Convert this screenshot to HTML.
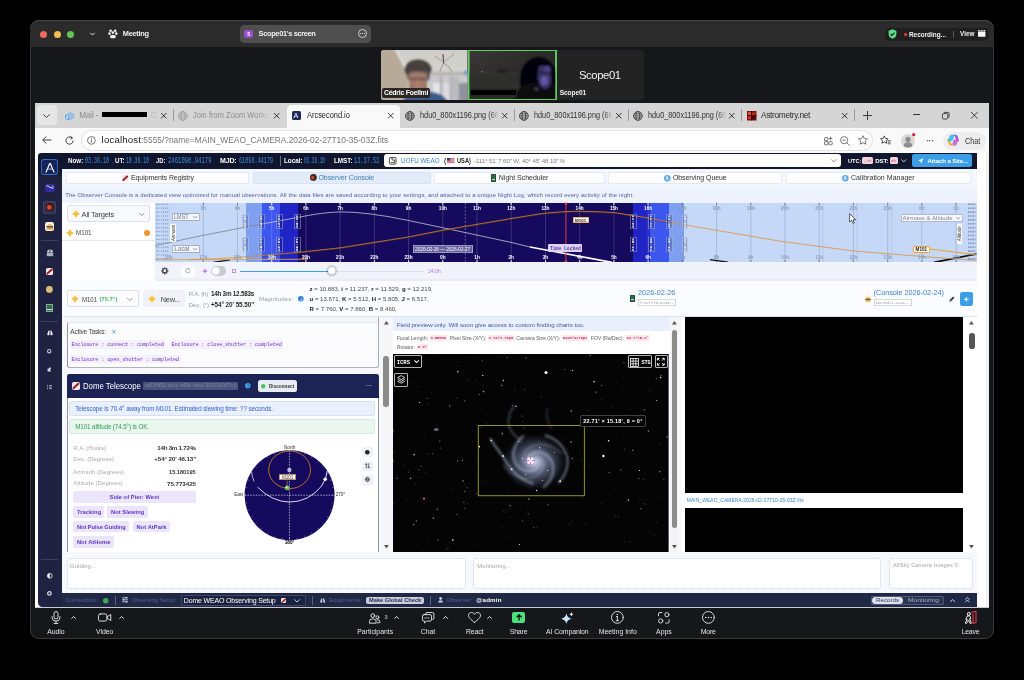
<!DOCTYPE html>
<html>
<head>
<meta charset="utf-8">
<title>Zoom Meeting</title>
<style>
html,body{margin:0;padding:0;background:#000;}
body{width:1024px;height:680px;position:relative;overflow:hidden;font-family:"Liberation Sans",sans-serif;}
.a{position:absolute;}
.t{position:absolute;white-space:nowrap;line-height:1;}
svg{position:absolute;overflow:visible;}
</style>
</head>
<body>
<div id="root" style="position:absolute;left:0;top:0;width:1024px;height:680px;will-change:transform;">
<!-- ===== sec_zoom ===== -->
<div class="a" style="left:30.0px;top:20.0px;width:964.0px;height:619.0px;background:#16171b;border-radius:9px;box-shadow:inset 0 0 0 1px #38383a;"></div>
<div class="a" style="left:30.0px;top:20.0px;width:964.0px;height:27.0px;background:#2b2b2c;border-radius:9px 9px 0 0;box-shadow:inset 0 1px 0 #454547;"></div>
<svg style="left:40.30px;top:30.50px;" width="7.00" height="7.00" viewBox="0 0 7.00 7.00"><ellipse cx="3.50" cy="3.50" rx="3.50" ry="3.50" fill="#ed6a5e"/></svg>
<svg style="left:53.50px;top:30.50px;" width="7.00" height="7.00" viewBox="0 0 7.00 7.00"><ellipse cx="3.50" cy="3.50" rx="3.50" ry="3.50" fill="#f4bf4f"/></svg>
<svg style="left:66.70px;top:30.50px;" width="7.00" height="7.00" viewBox="0 0 7.00 7.00"><ellipse cx="3.50" cy="3.50" rx="3.50" ry="3.50" fill="#61c554"/></svg>
<svg style="left:89.5px;top:32.0px;" width="5" height="4" viewBox="0 0 5 4"><path d="M0.3 0.8 L2.5 3 L4.7 0.8" fill="none" stroke="#e8e8e8" stroke-width="1"/></svg>
<svg style="left:108.0px;top:29.0px;" width="10" height="10" viewBox="0 0 10 10"><g fill="#f2f2f2"><circle cx="2.6" cy="1.7" r="1.3"/><circle cx="7.2" cy="1.7" r="1.3"/><circle cx="4.9" cy="3.6" r="1.3"/><circle cx="1.5" cy="4.6" r="1.3"/><circle cx="8.3" cy="4.6" r="1.3"/><rect x="2" y="6" width="5.8" height="3.3" rx="1.6"/></g></svg>
<div class="t" style="left:122.8px;top:30px;font-size:7.40px;color:#f0f0f0;font-weight:bold;letter-spacing:-0.280px;">Meeting</div>
<div class="a" style="left:240.2px;top:25.0px;width:131.2px;height:17.7px;background:#4f4f50;border-radius:4.5px;"></div>
<div class="a" style="left:244.4px;top:29.7px;width:8.7px;height:8.6px;background:#9b50cb;border-radius:2px;"></div>
<div class="t" style="left:247.3px;top:33px;font-size:4.60px;color:#fff;font-weight:bold;letter-spacing:-0.000px;">S</div>
<div class="t" style="left:258.6px;top:30px;font-size:7.40px;color:#f2f2f2;font-weight:bold;letter-spacing:-0.327px;">Scope01&#x27;s screen</div>
<svg style="left:358.2px;top:29.1px;" width="9" height="9" viewBox="0 0 9 9"><circle cx="4.5" cy="4.5" r="4" fill="none" stroke="#e6e6e6" stroke-width="0.8"/><circle cx="2.6" cy="4.5" r="0.6" fill="#e6e6e6"/><circle cx="4.5" cy="4.5" r="0.6" fill="#e6e6e6"/><circle cx="6.4" cy="4.5" r="0.6" fill="#e6e6e6"/></svg>
<div class="a" style="left:885.0px;top:28.0px;width:103.7px;height:12.6px;background:#1f1f20;border-radius:5px;"></div>
<svg style="left:888.3px;top:29.3px;" width="9" height="10" viewBox="0 0 9 10"><path d="M4.5 0.3 L8.4 1.8 V5 C8.4 7.4 6.6 9 4.5 9.8 C2.4 9 0.6 7.4 0.6 5 V1.8 Z" fill="#5fdc8a"/><path d="M2.6 5 L4 6.4 L6.5 3.6" fill="none" stroke="#1f1f20" stroke-width="1.1"/></svg>
<svg style="left:903.80px;top:32.60px;" width="3.20" height="3.20" viewBox="0 0 3.20 3.20"><ellipse cx="1.60" cy="1.60" rx="1.60" ry="1.60" fill="#f23c3c"/></svg>
<div class="t" style="left:909.0px;top:31px;font-size:7.20px;color:#f2f2f2;font-weight:bold;transform-origin:0 50%;transform:scaleX(0.8893);">Recording...</div>
<div class="a" style="left:953.2px;top:30.6px;width:0.7px;height:7.4px;background:#5a5a5c;"></div>
<div class="t" style="left:959.6px;top:30px;font-size:7.20px;color:#f2f2f2;font-weight:bold;transform-origin:0 50%;transform:scaleX(0.8846);">View</div>
<svg style="left:977.7px;top:30.2px;" width="8" height="7" viewBox="0 0 8 7"><rect x="0" y="1.5" width="7.4" height="5.3" rx="0.6" fill="#f5f5f5"/><rect x="0.2" y="0" width="1.6" height="1.2" fill="#f5f5f5"/><rect x="2.9" y="0" width="1.6" height="1.2" fill="#f5f5f5"/><rect x="5.6" y="0" width="1.6" height="1.2" fill="#f5f5f5"/></svg>
<svg style="left:380.9px;top:50.0px;" width="86.5" height="50" viewBox="0 0 86.5 50"><defs><filter id="bl1" x="-10%" y="-10%" width="120%" height="120%"><feGaussianBlur stdDeviation="0.9"/></filter>
<filter id="bl2" x="-10%" y="-10%" width="120%" height="120%"><feGaussianBlur stdDeviation="0.5"/></filter>
<clipPath id="c1"><path d="M3 0 H86.5 V50 H3 A3 3 0 0 1 0 47 V3 A3 3 0 0 1 3 0 Z"/></clipPath>
<linearGradient id="ceil" x1="0" y1="0" x2="0" y2="1"><stop offset="0" stop-color="#cfcdc8"/><stop offset="1" stop-color="#dcdad5"/></linearGradient></defs>
<g clip-path="url(#c1)"><rect width="87" height="50" fill="url(#ceil)"/>
<g filter="url(#bl1)">
<path d="M-2 -2 H16 L27 20 V52 H-2 Z" fill="#b7aa99"/>
<path d="M16 -2 L27 20 L27 25 L13 -2 Z" fill="#e3e0da"/>
<rect x="47" y="24" width="42" height="28" fill="#c9c8cb"/>
<rect x="50" y="22" width="39" height="3" fill="#b4b2b0"/>
<rect x="52" y="33" width="7" height="18" fill="#e6e6ea"/>
<rect x="62" y="33" width="6" height="18" fill="#dcdce0"/>
<rect x="59" y="26" width="2" height="25" fill="#a9a8ad"/>
<rect x="69" y="26" width="2.5" height="25" fill="#b1b0b5"/>
<rect x="77" y="33" width="11" height="19" fill="#8f919c"/>
<rect x="72" y="27" width="6" height="24" fill="#bcbbc0"/>
<circle cx="85" cy="23" r="2.5" fill="#6fa0c8"/>
<ellipse cx="37" cy="19.5" rx="13.5" ry="10" fill="#46413d"/>
<ellipse cx="31" cy="26" rx="5" ry="6" fill="#57514c"/>
<ellipse cx="44" cy="26" rx="5" ry="6" fill="#57514c"/>
<path d="M28 24 Q37 19 46 24 V38 Q37 44 28 38 Z" fill="#a17a6c"/>
<rect x="29" y="27.5" width="16" height="3" fill="#7d5d54"/>
<path d="M36 30 L38 30 L39 37 L35 37 Z" fill="#b4806f"/>
<path d="M29 36 Q37 46 46 36 V42 H29 Z" fill="#7d6259"/>
<path d="M22 52 Q24 41 40 41 Q62 41 67 52 Z" fill="#3b5b88"/>
</g>
<g filter="url(#bl2)" stroke-linecap="round">
<path d="M62 4.5 L62.6 13" stroke="#4a4744" stroke-width="1.1"/>
<path d="M62.6 13 L59 21 M62.6 13 L68 17 L71 22" stroke="#77736e" stroke-width="0.6" fill="none"/>
<path d="M55 7 L63 12 L72 5" stroke="#8a8680" stroke-width="0.55" fill="none"/>
<circle cx="55" cy="7" r="1.2" fill="#c8b48c"/><circle cx="72" cy="4.5" r="1.2" fill="#c8b48c"/><circle cx="59" cy="21" r="1" fill="#c8b48c"/><circle cx="71" cy="22" r="1" fill="#c8b48c"/>
</g></g></svg>
<div class="a" style="left:382.0px;top:88.0px;width:48.2px;height:9.8px;background:#2b2726;border-radius:2px;"></div>
<div class="t" style="left:384.0px;top:90px;font-size:6.90px;color:#fff;font-weight:bold;letter-spacing:-0.239px;">Cédric Foellmi</div>
<div class="a" style="left:467.7px;top:49.7px;width:89.3px;height:50.5px;background:#5fcf62;"></div>
<svg style="left:469.0px;top:51.0px;" width="86.7" height="48" viewBox="0 0 87 48.6"><defs><filter id="bl3" x="-10%" y="-10%" width="120%" height="120%"><feGaussianBlur stdDeviation="1.1"/></filter>
<clipPath id="c2"><rect x="0" y="0" width="87" height="48.6"/></clipPath>
<linearGradient id="dk" x1="0" y1="0" x2="1" y2="1"><stop offset="0" stop-color="#3a3837"/><stop offset="0.5" stop-color="#2b2a29"/><stop offset="1" stop-color="#232322"/></linearGradient></defs>
<g clip-path="url(#c2)"><rect width="87" height="48.6" fill="url(#dk)"/>
<g filter="url(#bl3)">
<path d="M0 22 L55 25 L55 50 L0 50 Z" fill="#2f2f2b"/>
<path d="M0 21 L60 24" stroke="#3d3c38" stroke-width="1"/>
<path d="M30 19 L39 19.5 L37 22.5 L28 22 Z" fill="#1b1b1b"/>
<path d="M10 38 L50 38" stroke="#3a3a36" stroke-width="1"/>
<ellipse cx="70" cy="30" rx="19" ry="24" fill="#060608"/>
<path d="M44 50 Q48 36 60 33 L88 33 V50 Z" fill="#09090c"/>
<path d="M71 15 Q80 13 82 22 L83 30 Q82 37 77 39 Q72 38 70 32 Q68 22 71 15 Z" fill="#3a3368"/>
<ellipse cx="79" cy="19" rx="3.4" ry="4" fill="#4b4384"/>
<ellipse cx="76" cy="30" rx="3.6" ry="4.6" fill="#6258a4"/>
<path d="M70 22 H84" stroke="#1c1a34" stroke-width="1.6"/>
<ellipse cx="68" cy="38.5" rx="2.6" ry="1" fill="#4a4666"/>
</g>
<circle cx="12.7" cy="21" r="0.8" fill="#8a8a5a"/>
</g></svg>
<div class="a" style="left:470.0px;top:88.2px;width:47.0px;height:9.8px;background:#2a2928;border-radius:2px;"></div>
<div class="a" style="left:471.0px;top:90.0px;width:45.0px;height:4.8px;background:#000;"></div>
<div class="a" style="left:557.0px;top:50.0px;width:87.0px;height:50.0px;background:#232324;border-radius:0 4px 4px 0;"></div>
<div class="t" style="left:579.0px;top:70px;font-size:11.30px;color:#f4f4f4;letter-spacing:-0.430px;">Scope01</div>
<div class="a" style="left:558.5px;top:88.3px;width:29.0px;height:9.3px;background:#262626;border-radius:1.5px;"></div>
<div class="t" style="left:559.8px;top:90px;font-size:6.50px;color:#f2f2f2;font-weight:bold;letter-spacing:-0.077px;">Scope01</div>
<!-- ===== sec_chrome ===== -->
<div class="a" style="left:34.7px;top:102.7px;width:954.3px;height:504.9px;background:#ffffff;"></div>
<div class="a" style="left:34.7px;top:102.7px;width:954.3px;height:24.9px;background:#d5d5d5;"></div>
<div class="a" style="left:37.0px;top:105.0px;width:19.6px;height:19.9px;background:#e6e6e6;border-radius:3.5px;"></div>
<svg style="left:43.4px;top:113.8px;" width="7" height="4" viewBox="0 0 7 4"><path d="M0.3 0.4 L3.5 3.4 L6.7 0.4" fill="none" stroke="#333" stroke-width="0.9"/></svg>
<svg style="left:63.5px;top:110.5px;" width="11" height="10" viewBox="0 0 11 10"><path d="M1 4 L6.5 1 L10.5 3 V7 L5 9.6 L1 7.5 Z" fill="#7db4e8" opacity="0.75"/><path d="M1 4 L5 6 V9.6 L1 7.5 Z" fill="#4f8fd6" opacity="0.8"/><circle cx="3" cy="6.6" r="1.3" fill="#e9f2fc" opacity="0.8"/><path d="M5 6 L10.5 3" stroke="#a9cdf2" stroke-width="0.8"/></svg>
<div class="t" style="left:79.2px;top:111px;font-size:8.30px;color:#8c8c8c;letter-spacing:-0.198px;">Mail -</div>
<div class="a" style="left:101.9px;top:112.0px;width:45.3px;height:5.0px;background:#000;"></div>
<div class="t" style="left:150.6px;top:111px;font-size:8.30px;color:#bdbdbd;">O</div>
<svg style="left:160.9px;top:112.9px;" width="5.4" height="5.4" viewBox="0 0 5.4 5.4"><path d="M0 0 L5.4 5.4 M5.4 0 L0 5.4" stroke="#2a2a2a" stroke-width="0.9" fill="none"/></svg>
<div class="a" style="left:173.0px;top:109.3px;width:0.8px;height:11.8px;background:#9a9a9a;"></div>
<svg style="left:177.9px;top:110.6px;" width="9.8" height="9.8" viewBox="0 0 9.8 9.8"><g fill="none" stroke="#9a9a9a" stroke-width="0.8"><circle cx="4.9" cy="4.9" r="4.4"/><ellipse cx="4.9" cy="4.9" rx="1.9800000000000002" ry="4.4"/><path d="M0.5 4.9 H9.3 M1.2 2.8000000000000003 H8.600000000000001 M1.2 7.0 H8.600000000000001"/></g></svg>
<div class="t" style="left:193.0px;top:111px;font-size:8.30px;color:#8c8c8c;transform-origin:0 50%;transform:scaleX(0.9070);-webkit-mask-image:linear-gradient(90deg,#000 85%,transparent 100%);mask-image:linear-gradient(90deg,#000 85%,transparent 100%);">Join from Zoom Workp</div>
<svg style="left:274.3px;top:112.9px;" width="5.4" height="5.4" viewBox="0 0 5.4 5.4"><path d="M0 0 L5.4 5.4 M5.4 0 L0 5.4" stroke="#2a2a2a" stroke-width="0.9" fill="none"/></svg>
<div class="a" style="left:287.0px;top:105.0px;width:113.3px;height:23.0px;background:#f9f9f9;border-radius:4px 4px 0 0;"></div>
<div class="a" style="left:291.5px;top:111.0px;width:9.0px;height:9.0px;background:#1d2a5c;border-radius:1.5px;"></div>
<div class="t" style="left:293.6px;top:112px;font-size:7.20px;color:#fff;letter-spacing:0.000px;">A</div>
<div class="t" style="left:306.5px;top:111px;font-size:8.30px;color:#222;transform-origin:0 50%;transform:scaleX(0.8941);">Arcsecond.io</div>
<svg style="left:388.3px;top:112.9px;" width="5.4" height="5.4" viewBox="0 0 5.4 5.4"><path d="M0 0 L5.4 5.4 M5.4 0 L0 5.4" stroke="#2a2a2a" stroke-width="0.9" fill="none"/></svg>
<svg style="left:405.1px;top:110.6px;" width="9.8" height="9.8" viewBox="0 0 9.8 9.8"><g fill="none" stroke="#333" stroke-width="0.8"><circle cx="4.9" cy="4.9" r="4.4"/><ellipse cx="4.9" cy="4.9" rx="1.9800000000000002" ry="4.4"/><path d="M0.5 4.9 H9.3 M1.2 2.8000000000000003 H8.600000000000001 M1.2 7.0 H8.600000000000001"/></g></svg>
<div class="t" style="left:420.0px;top:111px;font-size:8.30px;color:#303030;transform-origin:0 50%;transform:scaleX(0.8816);padding-bottom:3px;-webkit-mask-image:linear-gradient(90deg,#000 90%,transparent 100%);mask-image:linear-gradient(90deg,#000 90%,transparent 100%);">hdu0_800x1196.png (66</div>
<svg style="left:501.7px;top:112.9px;" width="5.4" height="5.4" viewBox="0 0 5.4 5.4"><path d="M0 0 L5.4 5.4 M5.4 0 L0 5.4" stroke="#2a2a2a" stroke-width="0.9" fill="none"/></svg>
<div class="a" style="left:514.0px;top:109.3px;width:0.8px;height:11.8px;background:#9a9a9a;"></div>
<svg style="left:519.1px;top:110.6px;" width="9.8" height="9.8" viewBox="0 0 9.8 9.8"><g fill="none" stroke="#333" stroke-width="0.8"><circle cx="4.9" cy="4.9" r="4.4"/><ellipse cx="4.9" cy="4.9" rx="1.9800000000000002" ry="4.4"/><path d="M0.5 4.9 H9.3 M1.2 2.8000000000000003 H8.600000000000001 M1.2 7.0 H8.600000000000001"/></g></svg>
<div class="t" style="left:533.8px;top:111px;font-size:8.30px;color:#303030;transform-origin:0 50%;transform:scaleX(0.8793);padding-bottom:3px;-webkit-mask-image:linear-gradient(90deg,#000 90%,transparent 100%);mask-image:linear-gradient(90deg,#000 90%,transparent 100%);">hdu0_800x1196.png (66</div>
<svg style="left:616.1px;top:112.9px;" width="5.4" height="5.4" viewBox="0 0 5.4 5.4"><path d="M0 0 L5.4 5.4 M5.4 0 L0 5.4" stroke="#2a2a2a" stroke-width="0.9" fill="none"/></svg>
<div class="a" style="left:628.4px;top:109.3px;width:0.8px;height:11.8px;background:#9a9a9a;"></div>
<svg style="left:633.1px;top:110.6px;" width="9.8" height="9.8" viewBox="0 0 9.8 9.8"><g fill="none" stroke="#333" stroke-width="0.8"><circle cx="4.9" cy="4.9" r="4.4"/><ellipse cx="4.9" cy="4.9" rx="1.9800000000000002" ry="4.4"/><path d="M0.5 4.9 H9.3 M1.2 2.8000000000000003 H8.600000000000001 M1.2 7.0 H8.600000000000001"/></g></svg>
<div class="t" style="left:648.0px;top:111px;font-size:8.30px;color:#303030;transform-origin:0 50%;transform:scaleX(0.8771);padding-bottom:3px;-webkit-mask-image:linear-gradient(90deg,#000 90%,transparent 100%);mask-image:linear-gradient(90deg,#000 90%,transparent 100%);">hdu0_800x1196.png (66</div>
<svg style="left:728.7px;top:112.9px;" width="5.4" height="5.4" viewBox="0 0 5.4 5.4"><path d="M0 0 L5.4 5.4 M5.4 0 L0 5.4" stroke="#2a2a2a" stroke-width="0.9" fill="none"/></svg>
<div class="a" style="left:740.6px;top:109.3px;width:0.8px;height:11.8px;background:#9a9a9a;"></div>
<svg style="left:746.5px;top:111.0px;" width="9.5" height="9.5" viewBox="0 0 9.5 9.5"><rect width="9.5" height="9.5" fill="#7a1410"/><rect x="1" y="1" width="3" height="3" fill="#e04a32"/><rect x="5" y="1.5" width="3.5" height="2.5" fill="#c22a1c"/><rect x="1.2" y="5" width="2.6" height="3.4" fill="#c9321f"/><rect x="5" y="5" width="3.4" height="3.4" fill="#4a0b08"/><path d="M0 4.5 H9.5 M4.5 0 V9.5" stroke="#2a0504" stroke-width="0.7"/></svg>
<div class="t" style="left:761.0px;top:111px;font-size:8.30px;color:#2a2a2a;letter-spacing:-0.311px;">Astrometry.net</div>
<svg style="left:841.9px;top:113.1px;" width="5.4" height="5.4" viewBox="0 0 5.4 5.4"><path d="M0 0 L5.4 5.4 M5.4 0 L0 5.4" stroke="#2a2a2a" stroke-width="0.9" fill="none"/></svg>
<div class="a" style="left:854.1px;top:109.3px;width:0.8px;height:11.8px;background:#9a9a9a;"></div>
<svg style="left:862.8px;top:111.2px;" width="9" height="9" viewBox="0 0 9 9"><path d="M4.5 0 V9 M0 4.5 H9" stroke="#2a2a2a" stroke-width="0.9"/></svg>
<div class="a" style="left:913.4px;top:114.2px;width:7.0px;height:0.9px;background:#333;"></div>
<svg style="left:942.0px;top:112.0px;" width="7.5" height="7.5" viewBox="0 0 7.5 7.5"><rect x="0.4" y="1.6" width="5.4" height="5.4" rx="1.2" fill="none" stroke="#333" stroke-width="0.9"/><path d="M1.8 1.4 V1 Q1.8 0.4 2.6 0.4 H6 Q7 0.4 7 1.4 V5 Q7 5.6 6.4 5.6" fill="none" stroke="#333" stroke-width="0.9"/></svg>
<svg style="left:971.2px;top:112.3px;" width="6.6" height="6.6" viewBox="0 0 6.6 6.6"><path d="M0 0 L6.6 6.6 M6.6 0 L0 6.6" stroke="#333" stroke-width="0.9" fill="none"/></svg>
<div class="a" style="left:34.7px;top:127.6px;width:954.3px;height:25.4px;background:#f9f9f9;"></div>
<svg style="left:42.2px;top:136.4px;" width="9.6" height="8" viewBox="0 0 9.6 8"><path d="M9.4 4 H0.8 M4.2 0.5 L0.7 4 L4.2 7.5" fill="none" stroke="#333" stroke-width="0.95"/></svg>
<svg style="left:64.9px;top:135.5px;" width="9.2" height="9.2" viewBox="0 0 9.2 9.2"><path d="M8.1 4.6 A3.6 3.6 0 1 1 6.9 1.9" fill="none" stroke="#333" stroke-width="0.95"/><path d="M5.6 0.4 L7.6 2 L5.6 3.2" fill="none" stroke="#333" stroke-width="0.95"/></svg>
<div class="a" style="left:82.3px;top:130.8px;width:790.1px;height:18.8px;background:#ffffff;border-radius:9.4px;box-shadow:0 0 0 0.8px #dcdcdc;"></div>
<svg style="left:86.9px;top:135.9px;" width="8.8" height="8.8" viewBox="0 0 8.8 8.8"><circle cx="4.4" cy="4.4" r="3.9" fill="none" stroke="#555" stroke-width="0.8"/><path d="M4.4 3.8 V6.6" stroke="#555" stroke-width="0.9"/><circle cx="4.4" cy="2.5" r="0.55" fill="#555"/></svg>
<div class="t" style="left:101.6px;top:135px;font-size:9.70px;color:#222;letter-spacing:0.146px;">localhost</div>
<div class="t" style="left:141.2px;top:135px;font-size:9.70px;color:#767676;transform-origin:0 50%;transform:scaleX(0.8640);">:5555/?name=MAIN_WEAO_CAMERA.2026-02-27T10-35-03Z.fits</div>
<svg style="left:823.5px;top:136.0px;" width="9.5" height="9.5" viewBox="0 0 9.5 9.5"><g fill="none" stroke="#555" stroke-width="0.8"><rect x="0.5" y="1.6" width="3.4" height="3.2" rx="0.6"/><rect x="0.5" y="5.6" width="3.4" height="3.2" rx="0.6"/><rect x="4.8" y="5.6" width="3.4" height="3.2" rx="0.6"/><path d="M6.6 0.6 V4.2 M4.8 2.4 H8.4"/></g></svg>
<svg style="left:840.2px;top:135.7px;" width="10" height="10" viewBox="0 0 10 10"><g fill="none" stroke="#555" stroke-width="0.8"><circle cx="4.2" cy="4.2" r="3.6"/><path d="M6.9 6.9 L9.6 9.6 M2.6 4.2 H5.8"/></g></svg>
<svg style="left:858.0px;top:135.2px;" width="10" height="10" viewBox="0 0 10 10"><path d="M5 0.7 L6.35 3.55 L9.45 3.95 L7.15 6.1 L7.75 9.2 L5 7.7 L2.25 9.2 L2.85 6.1 L0.55 3.95 L3.65 3.55 Z" fill="none" stroke="#555" stroke-width="0.8" stroke-linejoin="round"/></svg>
<svg style="left:880.3px;top:135.2px;" width="11" height="10" viewBox="0 0 11 10"><path d="M4.3 0.9 L5.45 3.4 L8.1 3.75 L6.15 5.6 L6.65 8.3 L4.3 7 L1.95 8.3 L2.45 5.6 L0.5 3.75 L3.15 3.4 Z" fill="none" stroke="#333" stroke-width="0.85" stroke-linejoin="round"/><path d="M7.6 5.6 H10.6 M7.6 7.2 H10.6 M7.8 8.8 H10.6" stroke="#333" stroke-width="0.8"/></svg>
<svg style="left:900.60px;top:133.60px;" width="14.00" height="14.00" viewBox="0 0 14.00 14.00"><ellipse cx="7.00" cy="7.00" rx="7.00" ry="7.00" fill="#d9d9d9"/></svg>
<svg style="left:900.6px;top:133.6px;" width="14" height="14" viewBox="0 0 14 14"><circle cx="7" cy="5.4" r="2.6" fill="#8e8e8e"/><path d="M2.6 12 Q2.8 8.3 7 8.3 Q11.2 8.3 11.4 12 Q9.4 13.6 7 13.6 Q4.6 13.6 2.6 12 Z" fill="#8e8e8e"/></svg>
<svg style="left:911.90px;top:133.40px;" width="3.30" height="3.30" viewBox="0 0 3.30 3.30"><ellipse cx="1.65" cy="1.65" rx="1.65" ry="1.65" fill="#e0262a"/></svg>
<svg style="left:926.50px;top:139.90px;" width="1.30" height="1.30" viewBox="0 0 1.30 1.30"><ellipse cx="0.65" cy="0.65" rx="0.65" ry="0.65" fill="#333"/></svg>
<svg style="left:929.40px;top:139.90px;" width="1.30" height="1.30" viewBox="0 0 1.30 1.30"><ellipse cx="0.65" cy="0.65" rx="0.65" ry="0.65" fill="#333"/></svg>
<svg style="left:932.30px;top:139.90px;" width="1.30" height="1.30" viewBox="0 0 1.30 1.30"><ellipse cx="0.65" cy="0.65" rx="0.65" ry="0.65" fill="#333"/></svg>
<div class="a" style="left:942.7px;top:131.6px;width:43.1px;height:18.0px;background:#ededed;border-radius:9px;"></div>
<svg style="left:947.4px;top:134.4px;" width="12.4" height="12.4" viewBox="0 0 12.4 12.4"><defs><linearGradient id="cp1" x1="0" y1="0" x2="1" y2="1"><stop offset="0" stop-color="#2a9df4"/><stop offset="0.45" stop-color="#8a5cf0"/><stop offset="1" stop-color="#e0489a"/></linearGradient><linearGradient id="cp2" x1="0" y1="0" x2="1" y2="1"><stop offset="0" stop-color="#37c9a0"/><stop offset="0.5" stop-color="#f5b53a"/><stop offset="1" stop-color="#f0603a"/></linearGradient></defs><path d="M4.2 0.8 H8.6 Q10.2 0.8 10.7 2.4 L11.9 6.2 Q12.3 7.6 10.9 7.6 H9.6 L8 2.6 Q7.7 1.7 6.8 1.7 H5.2 Z" fill="url(#cp1)"/><path d="M8.2 11.6 H3.8 Q2.2 11.6 1.7 10 L0.5 6.2 Q0.1 4.8 1.5 4.8 H2.8 L4.4 9.8 Q4.7 10.7 5.6 10.7 H7.2 Z" fill="url(#cp2)"/><path d="M4.2 0.8 Q3.0 0.9 2.6 2.2 L1.4 6 Q1.2 7 2.4 7 H4.8 Q5.6 7 5.9 6.1 L7 2.4 Q7.3 1.7 6.8 1.7 L5.2 1.7 Z" fill="#36b8e6" opacity="0.9"/><path d="M8.2 11.6 Q9.4 11.5 9.8 10.2 L11 6.4 Q11.2 5.4 10 5.4 H7.6 Q6.8 5.4 6.5 6.3 L5.4 10 Q5.1 10.7 5.6 10.7 L7.2 10.7 Z" fill="#c95ad6" opacity="0.9"/></svg>
<div class="t" style="left:964.7px;top:137px;font-size:8.40px;color:#333;transform-origin:0 50%;transform:scaleX(0.8623);">Chat</div>
<!-- ===== sec_apptop ===== -->
<div class="a" style="left:37.5px;top:153.2px;width:939.5px;height:454.4px;background:#f4f6fc;border-radius:3.5px 0 0 0;"></div>
<div class="a" style="left:37.5px;top:153.2px;width:24.4px;height:454.4px;background:#1f2341;border-radius:3.5px 0 0 0;"></div>
<div class="a" style="left:61.9px;top:153.2px;width:915.1px;height:15.8px;background:#11162f;"></div>
<div class="a" style="left:37.5px;top:153.2px;width:24.4px;height:15.8px;background:#11162f;border-radius:3.5px 0 0 0;"></div>
<div class="a" style="left:37.5px;top:169.0px;width:24.4px;height:9.0px;background:linear-gradient(#11162f,#1f2341);"></div>
<div class="a" style="left:41.4px;top:159.2px;width:16.4px;height:15.8px;background:#14235c;border-radius:3px;box-shadow:inset 0 0 0 0.9px #2f71b6;"></div>
<svg style="left:44.6px;top:161.7px;" width="10" height="11" viewBox="0 0 10 11"><path d="M1 10 Q2.6 7 4.2 2.6 Q5 0.6 5.8 2.6 Q7.4 7 9 10" fill="none" stroke="#fff" stroke-width="1.25" stroke-linecap="round"/><path d="M3.3 6.9 Q5 7.6 6.7 6.9" fill="none" stroke="#fff" stroke-width="0.8"/></svg>
<div class="a" style="left:44.6px;top:183.5px;width:10.0px;height:8.9px;background:#2d2ca0;border-radius:2px;"></div>
<svg style="left:45.6px;top:185.4px;" width="8" height="5" viewBox="0 0 8 5"><path d="M0.4 1.4 Q1.6 0 2.8 1.4 T5 2.6 Q6 3.8 7.6 2.6" fill="none" stroke="#fff" stroke-width="0.9"/><circle cx="6.6" cy="1" r="0.6" fill="#fff"/></svg>
<div class="a" style="left:42.8px;top:200.8px;width:13.2px;height:13.1px;background:#2c3050;border-radius:2.5px;box-shadow:inset 0 0 0 0.8px #454a6a;"></div>
<svg style="left:45.50px;top:203.40px;" width="8.00" height="8.00" viewBox="0 0 8.00 8.00"><ellipse cx="4.00" cy="4.00" rx="4.30" ry="4.30" fill="#2a1a1e" stroke="#6a3a3a" stroke-width="0.6"/></svg>
<svg style="left:47.10px;top:205.00px;" width="4.80" height="4.80" viewBox="0 0 4.80 4.80"><ellipse cx="2.40" cy="2.40" rx="2.40" ry="2.40" fill="#e8412c"/></svg>
<div class="a" style="left:44.6px;top:222.3px;width:9.8px;height:9.2px;background:#fbf3e3;border-radius:2.2px;"></div>
<svg style="left:44.6px;top:222.3px;" width="9.8" height="9.2" viewBox="0 0 9.8 9.2"><path d="M1.8 3.6 Q4.9 0.8 8 3.6 Z" fill="#e8952e"/><rect x="1.5" y="4.2" width="6.8" height="1.3" fill="#3a2a1e"/><rect x="1.5" y="6" width="6.8" height="1.6" rx="0.8" fill="#e8952e"/></svg>
<div class="a" style="left:41.4px;top:240.2px;width:16.4px;height:0.7px;background:#3b405e;"></div>
<svg style="left:45.6px;top:249.4px;" width="8" height="7.5" viewBox="0 0 8 7.5"><path d="M1 3.6 Q1 0.5 4 0.5 Q7 0.5 7 3.6 Z" fill="#cfd2dc"/><rect x="0.8" y="4" width="6.4" height="3.2" fill="#aeb2c0"/><rect x="3.2" y="0.6" width="1.4" height="3" fill="#5a5f78"/></svg>
<div class="a" style="left:46.0px;top:268.0px;width:7.2px;height:7.2px;background:#f3e9ea;border-radius:1.6px;"></div>
<svg style="left:46.0px;top:268.0px;" width="7.2" height="7.2" viewBox="0 0 7.2 7.2"><path d="M1.4 5.6 L5.8 1.6" stroke="#9c1f24" stroke-width="2" stroke-linecap="round"/></svg>
<svg style="left:46.10px;top:286.20px;" width="6.80" height="6.80" viewBox="0 0 6.80 6.80"><ellipse cx="3.40" cy="3.40" rx="3.40" ry="3.40" fill="#d8c07c"/></svg>
<div class="a" style="left:46.4px;top:303.6px;width:6.4px;height:8.2px;background:#2f6a4a;border-radius:1.2px;box-shadow:inset 0 0 0 0.7px #a9c8b6;"></div>
<div class="a" style="left:47.4px;top:308.8px;width:4.4px;height:1.4px;background:#d5e4da;"></div>
<div class="a" style="left:41.4px;top:320.6px;width:16.4px;height:0.7px;background:#3b405e;"></div>
<svg style="left:46.6px;top:330.2px;" width="6" height="5.6" viewBox="0 0 6 5.6"><path d="M1.6 0.4 L0.3 4 A1.1 1.1 0 0 0 2.5 4.4 L2.6 0.6 Z M4.4 0.4 L5.7 4 A1.1 1.1 0 0 1 3.5 4.4 L3.4 0.6 Z" fill="#f0f0f4"/></svg>
<svg style="left:47.30px;top:349.20px;" width="4.40" height="4.40" viewBox="0 0 4.40 4.40"><ellipse cx="2.20" cy="2.20" rx="1.65" ry="1.65" fill="none" stroke="#c9ccd8" stroke-width="1.1"/></svg>
<svg style="left:47.0px;top:367.4px;" width="5.4" height="5" viewBox="0 0 5.4 5"><path d="M0.6 4.6 V1.6 H2 L2.6 0.6 H4 V4.6 Z" fill="#d5d8e2"/><circle cx="4.2" cy="2.8" r="1" fill="#1f2341"/></svg>
<svg style="left:47.2px;top:385.2px;" width="5" height="4.2" viewBox="0 0 5 4.2"><path d="M0 0.5 H1 M2 0.5 H5 M0 2.1 H1 M2 2.1 H5 M0 3.7 H1 M2 3.7 H5" stroke="#b9bdcc" stroke-width="0.8"/></svg>
<div class="t" style="left:67.6px;top:157px;font-size:7.00px;color:#fff;font-weight:bold;transform-origin:0 50%;transform:scaleX(0.8885);">Now:</div>
<div class="t" style="left:85.2px;top:157px;font-size:8.60px;color:#3b90de;font-family:'Liberation Mono',monospace;transform-origin:0 50%;transform:scaleX(0.5813);">03.36.10</div>
<div class="t" style="left:114.5px;top:157px;font-size:7.00px;color:#fff;font-weight:bold;transform-origin:0 50%;transform:scaleX(0.8910);">UT:</div>
<div class="t" style="left:126.2px;top:157px;font-size:8.60px;color:#3b90de;font-family:'Liberation Mono',monospace;transform-origin:0 50%;transform:scaleX(0.5571);">10.36.10</div>
<div class="t" style="left:156.0px;top:157px;font-size:7.00px;color:#fff;font-weight:bold;transform-origin:0 50%;transform:scaleX(0.8333);">JD:</div>
<div class="t" style="left:167.8px;top:157px;font-size:8.60px;color:#3b90de;font-family:'Liberation Mono',monospace;transform-origin:0 50%;transform:scaleX(0.6484);">2461098.94179</div>
<div class="t" style="left:220.0px;top:157px;font-size:7.00px;color:#fff;font-weight:bold;letter-spacing:-0.153px;">MJD:</div>
<div class="t" style="left:238.5px;top:157px;font-size:8.60px;color:#3b90de;font-family:'Liberation Mono',monospace;transform-origin:0 50%;transform:scaleX(0.6025);">61098.44179</div>
<div class="a" style="left:279.8px;top:155.8px;width:0.7px;height:10.0px;background:#6a6f88;"></div>
<div class="t" style="left:284.0px;top:157px;font-size:7.00px;color:#fff;font-weight:bold;transform-origin:0 50%;transform:scaleX(0.8974);">Local:</div>
<div class="t" style="left:304.4px;top:157px;font-size:8.60px;color:#3b90de;font-family:'Liberation Mono',monospace;transform-origin:0 50%;transform:scaleX(0.5087);">03.36.10</div>
<div class="t" style="left:333.7px;top:157px;font-size:7.00px;color:#fff;font-weight:bold;transform-origin:0 50%;transform:scaleX(0.9026);">LMST:</div>
<div class="t" style="left:353.7px;top:157px;font-size:8.60px;color:#3b90de;font-family:'Liberation Mono',monospace;transform-origin:0 50%;transform:scaleX(0.6128);">13.37.53</div>
<div class="a" style="left:384.3px;top:154.4px;width:457.1px;height:12.6px;background:#fff;border-radius:3px;"></div>
<svg style="left:389.4px;top:156.9px;" width="7.4" height="7.6" viewBox="0 0 7.4 7.6"><rect x="0.4" y="0.4" width="6.6" height="6.8" rx="0.8" fill="#fff" stroke="#222" stroke-width="0.8"/><path d="M1.8 1.8 H4 V4 M1.8 5.6 H5.6 V2.6" fill="none" stroke="#222" stroke-width="0.8"/></svg>
<div class="t" style="left:400.9px;top:157px;font-size:7.30px;color:#3c84c8;transform-origin:0 50%;transform:scaleX(0.8575);">UOFU WEAO</div>
<div class="t" style="left:444.0px;top:158px;font-size:6.60px;color:#333;font-weight:bold;">(</div>
<svg style="left:447.3px;top:158.0px;" width="7.4" height="5.2" viewBox="0 0 7.4 5.2"><rect width="7.4" height="5.2" fill="#e9e9ee"/><path d="M0 0.5 H7.4 M0 1.9 H7.4 M0 3.3 H7.4 M0 4.7 H7.4" stroke="#c83a45" stroke-width="0.75"/><rect width="3.2" height="2.7" fill="#2f3f86"/></svg>
<div class="t" style="left:456.6px;top:158px;font-size:6.40px;color:#222;font-weight:bold;transform-origin:0 50%;transform:scaleX(0.8885);">USA)</div>
<div class="t" style="left:474.0px;top:158px;font-size:6.20px;color:#7a7a7a;letter-spacing:-0.127px;">-111° 51&#x27; 7.60&quot; W, 40° 45&#x27; 48.19&quot; N</div>
<svg style="left:831.2px;top:159.2px;" width="5.6" height="3.6" viewBox="0 0 5.6 3.6"><path d="M0.3 0.4 L2.8 3 L5.3 0.4" fill="none" stroke="#777" stroke-width="0.8"/></svg>
<div class="t" style="left:847.9px;top:158px;font-size:6.20px;color:#fff;font-weight:bold;transform-origin:0 50%;transform:scaleX(0.9117);">UTC:</div>
<div class="a" style="left:862.4px;top:157.2px;width:10.9px;height:7.2px;background:#f1d3da;border-radius:1.5px;"></div>
<div class="t" style="left:864.1px;top:159px;font-size:4.20px;color:#d04a66;font-family:'Liberation Mono',monospace;letter-spacing:0.000px;">-7h</div>
<div class="t" style="left:875.3px;top:158px;font-size:6.20px;color:#fff;font-weight:bold;letter-spacing:-0.220px;">DST:</div>
<div class="a" style="left:889.5px;top:157.2px;width:8.0px;height:7.2px;background:#f1d3da;border-radius:1.5px;"></div>
<div class="t" style="left:891.0px;top:159px;font-size:4.20px;color:#d04a66;font-family:'Liberation Mono',monospace;letter-spacing:-0.000px;">0h</div>
<svg style="left:900.8px;top:159.2px;" width="5.6" height="3.6" viewBox="0 0 5.6 3.6"><path d="M0.3 0.4 L2.8 3 L5.3 0.4" fill="none" stroke="#dfe2ee" stroke-width="0.85"/></svg>
<div class="a" style="left:912.3px;top:153.9px;width:59.7px;height:12.9px;background:#3c9ee6;border-radius:2.5px;"></div>
<svg style="left:917.8px;top:157.6px;" width="5.6" height="5.6" viewBox="0 0 5.6 5.6"><path d="M5.4 0.2 L0.2 2.4 L2.4 3.2 L3.2 5.4 Z" fill="#fff"/></svg>
<div class="t" style="left:927.5px;top:158px;font-size:6.10px;color:#fff;font-weight:bold;letter-spacing:-0.108px;">Attach a Site...</div>
<div class="a" style="left:61.9px;top:169.0px;width:915.1px;height:18.4px;background:#f3f6fd;"></div>
<div class="a" style="left:65.6px;top:172.0px;width:183.9px;height:11.6px;background:#fdfdff;border-radius:2.5px;box-shadow:inset 0 0 0 0.7px #dde2ee;"></div>
<div class="a" style="left:253.4px;top:172.0px;width:177.3px;height:11.6px;background:#e2ebf9;border-radius:2.5px;box-shadow:inset 0 0 0 0.7px #d3def2;"></div>
<div class="a" style="left:434.4px;top:172.0px;width:170.2px;height:11.6px;background:#fdfdff;border-radius:2.5px;box-shadow:inset 0 0 0 0.7px #dde2ee;"></div>
<div class="a" style="left:607.7px;top:172.0px;width:174.8px;height:11.6px;background:#fdfdff;border-radius:2.5px;box-shadow:inset 0 0 0 0.7px #dde2ee;"></div>
<div class="a" style="left:785.7px;top:172.0px;width:185.8px;height:11.6px;background:#fdfdff;border-radius:2.5px;box-shadow:inset 0 0 0 0.7px #dde2ee;"></div>
<svg style="left:122.2px;top:174.8px;" width="6.4" height="6.4" viewBox="0 0 6.4 6.4"><rect width="6.4" height="6.4" rx="1.6" fill="#f3e6e6"/><path d="M1.3 5 L5.2 1.5" stroke="#9c1f24" stroke-width="1.9" stroke-linecap="round"/></svg>
<div class="t" style="left:131.0px;top:174px;font-size:7.00px;color:#333;letter-spacing:-0.094px;">Equipments Registry</div>
<svg style="left:309.50px;top:174.30px;" width="6.80" height="6.80" viewBox="0 0 6.80 6.80"><ellipse cx="3.40" cy="3.40" rx="3.40" ry="3.40" fill="#3a2622"/></svg>
<svg style="left:311.30px;top:176.10px;" width="3.20" height="3.20" viewBox="0 0 3.20 3.20"><ellipse cx="1.60" cy="1.60" rx="1.60" ry="1.60" fill="#e2452e"/></svg>
<div class="t" style="left:318.4px;top:174px;font-size:7.00px;color:#3f7db4;letter-spacing:-0.038px;">Observer Console</div>
<div class="a" style="left:490.6px;top:174.4px;width:5.6px;height:7.2px;background:#2f6a4a;border-radius:1px;box-shadow:inset 0 0 0 0.6px #1c3f2c;"></div>
<div class="a" style="left:491.6px;top:178.8px;width:3.6px;height:1.4px;background:#bcd6c6;"></div>
<div class="t" style="left:498.8px;top:174px;font-size:7.00px;color:#333;letter-spacing:-0.014px;">Night Scheduler</div>
<svg style="left:663.90px;top:174.50px;" width="6.60" height="6.60" viewBox="0 0 6.60 6.60"><ellipse cx="3.30" cy="3.30" rx="3.30" ry="3.30" fill="#5aa7ee"/></svg>
<div class="t" style="left:665.5px;top:177px;font-size:4.60px;color:#fff;font-weight:bold;letter-spacing:-0.000px;">A</div>
<div class="t" style="left:672.9px;top:174px;font-size:7.00px;color:#333;letter-spacing:-0.071px;">Observing Queue</div>
<svg style="left:842.00px;top:174.50px;" width="6.60" height="6.60" viewBox="0 0 6.60 6.60"><ellipse cx="3.30" cy="3.30" rx="3.30" ry="3.30" fill="#5aa7ee"/></svg>
<div class="t" style="left:843.6px;top:177px;font-size:4.60px;color:#fff;font-weight:bold;letter-spacing:-0.000px;">A</div>
<div class="t" style="left:851.0px;top:174px;font-size:7.00px;color:#333;letter-spacing:0.030px;">Calibration Manager</div>
<div class="a" style="left:61.9px;top:187.4px;width:915.1px;height:15.2px;background:#eef2fc;"></div>
<div class="t" style="left:65.2px;top:192px;font-size:6.00px;color:#5163a2;letter-spacing:0.077px;">The Observer Console is a dedicated view optimized for manual observations. All the data files are saved according to your settings, and attached to a unique Night Log, which record every activity of the night.</div>
<!-- ===== sec_timeline ===== -->
<div class="a" style="left:61.9px;top:202.6px;width:92.7px;height:76.4px;background:#fff;"></div>
<div class="a" style="left:66.6px;top:205.3px;width:83.7px;height:16.8px;background:#f8f9fd;border-radius:3px;box-shadow:inset 0 0 0 0.8px #d4d8e4;"></div>
<svg style="left:75.6px;top:213.9px;" width="1" height="1" viewBox="0 0 1 1"><path d="M0 -4.0 Q1.12 -1.12 4.0 0 Q1.12 1.12 0 4.0 Q-1.12 1.12 -4.0 0 Q-1.12 -1.12 0 -4.0 Z" fill="#f4bf45" stroke="#f9e0a2" stroke-width="0.4"/></svg>
<div class="t" style="left:81.6px;top:211px;font-size:7.60px;color:#444;letter-spacing:-0.268px;">All Targets</div>
<svg style="left:139.0px;top:212.6px;" width="5.6" height="2.8" viewBox="0 0 5.6 2.8"><path d="M0.2 0.2 L2.8 2.5 L5.3999999999999995 0.2" fill="none" stroke="#777" stroke-width="0.8"/></svg>
<svg style="left:70.2px;top:232.6px;" width="1" height="1" viewBox="0 0 1 1"><path d="M0 -4.0 Q1.12 -1.12 4.0 0 Q1.12 1.12 0 4.0 Q-1.12 1.12 -4.0 0 Q-1.12 -1.12 0 -4.0 Z" fill="#f4bf45" stroke="#f9e0a2" stroke-width="0.4"/></svg>
<div class="t" style="left:76.0px;top:229px;font-size:7.20px;color:#444;transform-origin:0 50%;transform:scaleX(0.8661);">M101</div>
<svg style="left:144.20px;top:229.60px;" width="6.00" height="6.00" viewBox="0 0 6.00 6.00"><ellipse cx="3.00" cy="3.00" rx="3.00" ry="3.00" fill="#f0932b"/></svg>
<div class="a" style="left:61.9px;top:240.2px;width:92.7px;height:0.7px;background:#e6e9f2;"></div>
<div class="a" style="left:155.2px;top:202.8px;width:91.1px;height:59.6px;background:#c5d8f8;"></div>
<div class="a" style="left:246.0px;top:202.8px;width:16.0px;height:59.6px;background:#7fa0f1;"></div>
<div class="a" style="left:261.7px;top:202.8px;width:18.3px;height:59.6px;background:#3d57ee;"></div>
<div class="a" style="left:279.7px;top:202.8px;width:18.6px;height:59.6px;background:#2024c4;"></div>
<div class="a" style="left:298.0px;top:202.8px;width:335.3px;height:59.6px;background:#150a5e;"></div>
<div class="a" style="left:633.0px;top:202.8px;width:17.5px;height:59.6px;background:#2024c4;"></div>
<div class="a" style="left:650.2px;top:202.8px;width:19.3px;height:59.6px;background:#3d57ee;"></div>
<div class="a" style="left:669.2px;top:202.8px;width:15.4px;height:59.6px;background:#7fa0f1;"></div>
<div class="a" style="left:684.3px;top:202.8px;width:292.4px;height:59.6px;background:#c5d8f8;"></div>
<svg style="left:0;top:0" width="1024" height="680" viewBox="0 0 1024 680"><defs><clipPath id="nv"><rect x="262" y="200" width="407" height="64"/></clipPath></defs><path d="M203.3 202.8 V262.4" stroke="rgba(110,125,160,0.55)" stroke-width="0.6"/><path d="M203.3 202.8 V205.3 M203.3 259.9 V262.4" stroke="#6b7896" stroke-width="0.9"/><path d="M237.5 202.8 V262.4" stroke="rgba(110,125,160,0.55)" stroke-width="0.6"/><path d="M237.5 202.8 V205.3 M237.5 259.9 V262.4" stroke="#6b7896" stroke-width="0.9"/><path d="M271.7 202.8 V262.4" stroke="rgba(255,255,255,0.28)" stroke-width="0.6"/><path d="M271.7 202.8 V205.3 M271.7 259.9 V262.4" stroke="#fff" stroke-width="0.9"/><path d="M305.9 202.8 V262.4" stroke="rgba(255,255,255,0.28)" stroke-width="0.6"/><path d="M305.9 202.8 V205.3 M305.9 259.9 V262.4" stroke="#fff" stroke-width="0.9"/><path d="M340.1 202.8 V262.4" stroke="rgba(255,255,255,0.28)" stroke-width="0.6"/><path d="M340.1 202.8 V205.3 M340.1 259.9 V262.4" stroke="#fff" stroke-width="0.9"/><path d="M374.4 202.8 V262.4" stroke="rgba(255,255,255,0.28)" stroke-width="0.6"/><path d="M374.4 202.8 V205.3 M374.4 259.9 V262.4" stroke="#fff" stroke-width="0.9"/><path d="M408.6 202.8 V262.4" stroke="rgba(255,255,255,0.28)" stroke-width="0.6"/><path d="M408.6 202.8 V205.3 M408.6 259.9 V262.4" stroke="#fff" stroke-width="0.9"/><path d="M442.8 202.8 V262.4" stroke="rgba(255,255,255,0.28)" stroke-width="0.6"/><path d="M442.8 202.8 V205.3 M442.8 259.9 V262.4" stroke="#fff" stroke-width="0.9"/><path d="M477.0 202.8 V262.4" stroke="rgba(255,255,255,0.28)" stroke-width="0.6"/><path d="M477.0 202.8 V205.3 M477.0 259.9 V262.4" stroke="#fff" stroke-width="0.9"/><path d="M511.2 202.8 V262.4" stroke="rgba(255,255,255,0.28)" stroke-width="0.6"/><path d="M511.2 202.8 V205.3 M511.2 259.9 V262.4" stroke="#fff" stroke-width="0.9"/><path d="M545.5 202.8 V262.4" stroke="rgba(255,255,255,0.28)" stroke-width="0.6"/><path d="M545.5 202.8 V205.3 M545.5 259.9 V262.4" stroke="#fff" stroke-width="0.9"/><path d="M579.7 202.8 V262.4" stroke="rgba(255,255,255,0.28)" stroke-width="0.6"/><path d="M579.7 202.8 V205.3 M579.7 259.9 V262.4" stroke="#fff" stroke-width="0.9"/><path d="M613.9 202.8 V262.4" stroke="rgba(255,255,255,0.28)" stroke-width="0.6"/><path d="M613.9 202.8 V205.3 M613.9 259.9 V262.4" stroke="#fff" stroke-width="0.9"/><path d="M648.1 202.8 V262.4" stroke="rgba(255,255,255,0.28)" stroke-width="0.6"/><path d="M648.1 202.8 V205.3 M648.1 259.9 V262.4" stroke="#fff" stroke-width="0.9"/><path d="M682.3 202.8 V262.4" stroke="rgba(110,125,160,0.55)" stroke-width="0.6"/><path d="M682.3 202.8 V205.3 M682.3 259.9 V262.4" stroke="#6b7896" stroke-width="0.9"/><path d="M716.6 202.8 V262.4" stroke="rgba(110,125,160,0.55)" stroke-width="0.6"/><path d="M716.6 202.8 V205.3 M716.6 259.9 V262.4" stroke="#6b7896" stroke-width="0.9"/><path d="M750.8 202.8 V262.4" stroke="rgba(110,125,160,0.55)" stroke-width="0.6"/><path d="M750.8 202.8 V205.3 M750.8 259.9 V262.4" stroke="#6b7896" stroke-width="0.9"/><path d="M785.0 202.8 V262.4" stroke="rgba(110,125,160,0.55)" stroke-width="0.6"/><path d="M785.0 202.8 V205.3 M785.0 259.9 V262.4" stroke="#6b7896" stroke-width="0.9"/><path d="M819.2 202.8 V262.4" stroke="rgba(110,125,160,0.55)" stroke-width="0.6"/><path d="M819.2 202.8 V205.3 M819.2 259.9 V262.4" stroke="#6b7896" stroke-width="0.9"/><path d="M853.4 202.8 V262.4" stroke="rgba(110,125,160,0.55)" stroke-width="0.6"/><path d="M853.4 202.8 V205.3 M853.4 259.9 V262.4" stroke="#6b7896" stroke-width="0.9"/><path d="M887.7 202.8 V262.4" stroke="rgba(110,125,160,0.55)" stroke-width="0.6"/><path d="M887.7 202.8 V205.3 M887.7 259.9 V262.4" stroke="#6b7896" stroke-width="0.9"/><path d="M921.9 202.8 V262.4" stroke="rgba(110,125,160,0.55)" stroke-width="0.6"/><path d="M921.9 202.8 V205.3 M921.9 259.9 V262.4" stroke="#6b7896" stroke-width="0.9"/><path d="M956.1 202.8 V262.4" stroke="rgba(110,125,160,0.55)" stroke-width="0.6"/><path d="M956.1 202.8 V205.3 M956.1 259.9 V262.4" stroke="#6b7896" stroke-width="0.9"/><path d="M465.3 202.8 V262.4" stroke="rgba(255,255,255,0.6)" stroke-width="0.6" stroke-dasharray="2 1.6"/><path d="M823.0 202.8 V262.4" stroke="rgba(110,125,160,0.35)" stroke-width="0.5"/><path d="M857.0 202.8 V262.4" stroke="rgba(110,125,160,0.35)" stroke-width="0.5"/><path d="M892.0 202.8 V262.4" stroke="rgba(110,125,160,0.35)" stroke-width="0.5"/><path d="M155.2 245.6 L200 236 L246 227 L262 224" fill="none" stroke="#7b7f8a" stroke-width="0.8"/><path d="M262 224 L298 217.4 Q322 212.4 340 211.9 Q366 211.6 408 220.4 L442.6 227.7 L511 242.4 L530 247" fill="none" stroke="#c3c6d2" stroke-width="0.8"/><path d="M530 247 L612 262.4" fill="none" stroke="#fff" stroke-width="1.6"/><path d="M213 262.4 L230 259.8" stroke="#111" stroke-width="1.2"/><path d="M710 259.6 L728 262.2" stroke="#111" stroke-width="1.3"/><path d="M934 262.4 L976.4 254" stroke="#111" stroke-width="1.7"/><path d="M155.2 259.7 L246 259.6 L308 259.2" fill="none" stroke="#e3a23c" stroke-width="0.9"/><path d="M190 259.6 L215 258.8 L236 257.4 L262 255.4 L298 252.4 L340 247.8 L408 237 L442.6 230.2 L511 218.5 L540 213.8 Q565 211 580 211.3 Q598 211.4 614.7 212.6 L648 218 L684 224.8 L717 230.4 L780 241.2 L854 251 L922 256.5 L976.4 260.4" fill="none" stroke="#5a3210" stroke-width="0.7" transform="translate(0,0.7)" clip-path="url(#nv)"/><path d="M190 259.6 L215 258.8 L236 257.4 L262 255.4 L298 252.4 L340 247.8 L408 237 L442.6 230.2 L511 218.5 L540 213.8 Q565 211 580 211.3 Q598 211.4 614.7 212.6 L648 218 L684 224.8 L717 230.4 L780 241.2 L854 251 L922 256.5 L976.4 260.4" fill="none" stroke="#de8e2c" stroke-width="0.75"/><path d="M930 249 L976.4 254.8" fill="none" stroke="#f0a02e" stroke-width="1.1"/><path d="M565.9 202.8 V262.4" stroke="#e53935" stroke-width="1"/><path d="M564 202.8 H567.8 L565.9 205.8 Z M564 262.4 H567.8 L565.9 259.4 Z" fill="#e53935"/><path d="M156 204.3 H159.5" stroke="#6b7896" stroke-width="0.5"/><path d="M161 204.3 H169" stroke="#7e8aa8" stroke-width="1.6" stroke-dasharray="1.3 0.7" opacity="0.55"/><path d="M156 208.2 H159.5" stroke="#6b7896" stroke-width="0.5"/><path d="M161 208.2 H169" stroke="#7e8aa8" stroke-width="1.6" stroke-dasharray="1.3 0.7" opacity="0.55"/><path d="M156 212.1 H159.5" stroke="#6b7896" stroke-width="0.5"/><path d="M161 212.1 H169" stroke="#7e8aa8" stroke-width="1.6" stroke-dasharray="1.3 0.7" opacity="0.55"/><path d="M156 216.0 H159.5" stroke="#6b7896" stroke-width="0.5"/><path d="M161 216.0 H169" stroke="#7e8aa8" stroke-width="1.6" stroke-dasharray="1.3 0.7" opacity="0.55"/><path d="M156 219.9 H159.5" stroke="#6b7896" stroke-width="0.5"/><path d="M161 219.9 H169" stroke="#7e8aa8" stroke-width="1.6" stroke-dasharray="1.3 0.7" opacity="0.55"/><path d="M156 223.8 H159.5" stroke="#6b7896" stroke-width="0.5"/><path d="M161 223.8 H169" stroke="#7e8aa8" stroke-width="1.6" stroke-dasharray="1.3 0.7" opacity="0.55"/><path d="M156 227.7 H159.5" stroke="#6b7896" stroke-width="0.5"/><path d="M161 227.7 H169" stroke="#7e8aa8" stroke-width="1.6" stroke-dasharray="1.3 0.7" opacity="0.55"/><path d="M156 231.6 H159.5" stroke="#6b7896" stroke-width="0.5"/><path d="M161 231.6 H169" stroke="#7e8aa8" stroke-width="1.6" stroke-dasharray="1.3 0.7" opacity="0.55"/><path d="M156 235.5 H159.5" stroke="#6b7896" stroke-width="0.5"/><path d="M161 235.5 H169" stroke="#7e8aa8" stroke-width="1.6" stroke-dasharray="1.3 0.7" opacity="0.55"/><path d="M156 239.4 H159.5" stroke="#6b7896" stroke-width="0.5"/><path d="M161 239.4 H169" stroke="#7e8aa8" stroke-width="1.6" stroke-dasharray="1.3 0.7" opacity="0.55"/><path d="M156 243.3 H159.5" stroke="#6b7896" stroke-width="0.5"/><path d="M161 243.3 H169" stroke="#7e8aa8" stroke-width="1.6" stroke-dasharray="1.3 0.7" opacity="0.55"/><path d="M156 247.2 H159.5" stroke="#6b7896" stroke-width="0.5"/><path d="M161 247.2 H169" stroke="#7e8aa8" stroke-width="1.6" stroke-dasharray="1.3 0.7" opacity="0.55"/><path d="M156 251.1 H159.5" stroke="#6b7896" stroke-width="0.5"/><path d="M161 251.1 H169" stroke="#7e8aa8" stroke-width="1.6" stroke-dasharray="1.3 0.7" opacity="0.55"/><path d="M156 255.0 H159.5" stroke="#6b7896" stroke-width="0.5"/><path d="M161 255.0 H169" stroke="#7e8aa8" stroke-width="1.6" stroke-dasharray="1.3 0.7" opacity="0.55"/><path d="M156 258.9 H159.5" stroke="#6b7896" stroke-width="0.5"/><path d="M161 258.9 H169" stroke="#7e8aa8" stroke-width="1.6" stroke-dasharray="1.3 0.7" opacity="0.55"/><path d="M968 204.3 H975.6" stroke="#4a5570" stroke-width="1.6" stroke-dasharray="1 0.8" opacity="0.6"/><path d="M968 208.2 H975.6" stroke="#4a5570" stroke-width="1.6" stroke-dasharray="1 0.8" opacity="0.6"/><path d="M968 212.1 H975.6" stroke="#4a5570" stroke-width="1.6" stroke-dasharray="1 0.8" opacity="0.6"/><path d="M968 216.0 H975.6" stroke="#4a5570" stroke-width="1.6" stroke-dasharray="1 0.8" opacity="0.6"/><path d="M968 219.9 H975.6" stroke="#4a5570" stroke-width="1.6" stroke-dasharray="1 0.8" opacity="0.6"/><path d="M968 223.8 H975.6" stroke="#4a5570" stroke-width="1.6" stroke-dasharray="1 0.8" opacity="0.6"/><path d="M968 227.7 H975.6" stroke="#4a5570" stroke-width="1.6" stroke-dasharray="1 0.8" opacity="0.6"/><path d="M968 231.6 H975.6" stroke="#4a5570" stroke-width="1.6" stroke-dasharray="1 0.8" opacity="0.6"/><path d="M968 235.5 H975.6" stroke="#4a5570" stroke-width="1.6" stroke-dasharray="1 0.8" opacity="0.6"/><path d="M968 239.4 H975.6" stroke="#4a5570" stroke-width="1.6" stroke-dasharray="1 0.8" opacity="0.6"/><path d="M968 243.3 H975.6" stroke="#4a5570" stroke-width="1.6" stroke-dasharray="1 0.8" opacity="0.6"/><path d="M968 247.2 H975.6" stroke="#4a5570" stroke-width="1.6" stroke-dasharray="1 0.8" opacity="0.6"/><path d="M968 251.1 H975.6" stroke="#4a5570" stroke-width="1.6" stroke-dasharray="1 0.8" opacity="0.6"/><path d="M968 255.0 H975.6" stroke="#4a5570" stroke-width="1.6" stroke-dasharray="1 0.8" opacity="0.6"/><path d="M968 258.9 H975.6" stroke="#4a5570" stroke-width="1.6" stroke-dasharray="1 0.8" opacity="0.6"/></svg>
<div class="t" style="left:200.5px;top:207px;font-size:4.70px;color:#8c9bbb;font-weight:bold;letter-spacing:0.000px;">3h</div>
<div class="t" style="left:199.2px;top:256px;font-size:4.70px;color:#8c9bbb;font-weight:bold;letter-spacing:0.000px;">17h</div>
<div class="t" style="left:234.7px;top:207px;font-size:4.70px;color:#8c9bbb;font-weight:bold;letter-spacing:0.000px;">4h</div>
<div class="t" style="left:233.4px;top:256px;font-size:4.70px;color:#8c9bbb;font-weight:bold;letter-spacing:-0.000px;">18h</div>
<div class="t" style="left:269.0px;top:207px;font-size:4.70px;color:#fff;font-weight:bold;letter-spacing:-0.000px;">5h</div>
<div class="t" style="left:267.7px;top:256px;font-size:4.70px;color:#fff;font-weight:bold;letter-spacing:0.000px;">19h</div>
<div class="t" style="left:303.2px;top:207px;font-size:4.70px;color:#fff;font-weight:bold;letter-spacing:-0.000px;">6h</div>
<div class="t" style="left:301.9px;top:256px;font-size:4.70px;color:#fff;font-weight:bold;letter-spacing:0.000px;">20h</div>
<div class="t" style="left:337.4px;top:207px;font-size:4.70px;color:#fff;font-weight:bold;letter-spacing:-0.000px;">7h</div>
<div class="t" style="left:336.1px;top:256px;font-size:4.70px;color:#fff;font-weight:bold;letter-spacing:0.000px;">21h</div>
<div class="t" style="left:371.6px;top:207px;font-size:4.70px;color:#fff;font-weight:bold;letter-spacing:-0.000px;">8h</div>
<div class="t" style="left:370.3px;top:256px;font-size:4.70px;color:#fff;font-weight:bold;letter-spacing:0.000px;">22h</div>
<div class="t" style="left:405.8px;top:207px;font-size:4.70px;color:#fff;font-weight:bold;letter-spacing:-0.000px;">9h</div>
<div class="t" style="left:404.5px;top:256px;font-size:4.70px;color:#fff;font-weight:bold;letter-spacing:0.000px;">23h</div>
<div class="t" style="left:438.8px;top:207px;font-size:4.70px;color:#fff;font-weight:bold;letter-spacing:0.000px;">10h</div>
<div class="t" style="left:440.1px;top:256px;font-size:4.70px;color:#fff;font-weight:bold;letter-spacing:-0.000px;">0h</div>
<div class="t" style="left:473.1px;top:207px;font-size:4.70px;color:#fff;font-weight:bold;letter-spacing:0.000px;">11h</div>
<div class="t" style="left:474.3px;top:256px;font-size:4.70px;color:#fff;font-weight:bold;letter-spacing:-0.000px;">1h</div>
<div class="t" style="left:507.2px;top:207px;font-size:4.70px;color:#fff;font-weight:bold;letter-spacing:0.000px;">12h</div>
<div class="t" style="left:508.5px;top:256px;font-size:4.70px;color:#fff;font-weight:bold;letter-spacing:0.000px;">2h</div>
<div class="t" style="left:541.4px;top:207px;font-size:4.70px;color:#fff;font-weight:bold;letter-spacing:0.000px;">13h</div>
<div class="t" style="left:542.7px;top:256px;font-size:4.70px;color:#fff;font-weight:bold;letter-spacing:0.000px;">3h</div>
<div class="t" style="left:575.6px;top:207px;font-size:4.70px;color:#fff;font-weight:bold;letter-spacing:0.000px;">14h</div>
<div class="t" style="left:576.9px;top:256px;font-size:4.70px;color:#fff;font-weight:bold;letter-spacing:0.000px;">4h</div>
<div class="t" style="left:609.9px;top:207px;font-size:4.70px;color:#fff;font-weight:bold;letter-spacing:0.000px;">15h</div>
<div class="t" style="left:611.2px;top:256px;font-size:4.70px;color:#fff;font-weight:bold;letter-spacing:0.000px;">5h</div>
<div class="t" style="left:644.1px;top:207px;font-size:4.70px;color:#fff;font-weight:bold;letter-spacing:0.000px;">16h</div>
<div class="t" style="left:645.4px;top:256px;font-size:4.70px;color:#fff;font-weight:bold;letter-spacing:0.000px;">6h</div>
<div class="t" style="left:678.3px;top:207px;font-size:4.70px;color:#8c9bbb;font-weight:bold;letter-spacing:0.000px;">17h</div>
<div class="t" style="left:679.6px;top:256px;font-size:4.70px;color:#8c9bbb;font-weight:bold;letter-spacing:0.000px;">7h</div>
<div class="t" style="left:712.5px;top:207px;font-size:4.70px;color:#8c9bbb;font-weight:bold;letter-spacing:0.000px;">18h</div>
<div class="t" style="left:713.8px;top:256px;font-size:4.70px;color:#8c9bbb;font-weight:bold;letter-spacing:0.000px;">8h</div>
<div class="t" style="left:746.7px;top:207px;font-size:4.70px;color:#8c9bbb;font-weight:bold;letter-spacing:0.000px;">19h</div>
<div class="t" style="left:748.0px;top:256px;font-size:4.70px;color:#8c9bbb;font-weight:bold;letter-spacing:0.000px;">9h</div>
<div class="t" style="left:781.0px;top:207px;font-size:4.70px;color:#8c9bbb;font-weight:bold;letter-spacing:0.000px;">20h</div>
<div class="t" style="left:781.0px;top:256px;font-size:4.70px;color:#8c9bbb;font-weight:bold;letter-spacing:0.000px;">10h</div>
<div class="t" style="left:815.2px;top:207px;font-size:4.70px;color:#8c9bbb;font-weight:bold;letter-spacing:0.000px;">21h</div>
<div class="t" style="left:815.3px;top:256px;font-size:4.70px;color:#8c9bbb;font-weight:bold;letter-spacing:0.000px;">11h</div>
<div class="t" style="left:849.4px;top:207px;font-size:4.70px;color:#8c9bbb;font-weight:bold;letter-spacing:0.000px;">22h</div>
<div class="t" style="left:849.4px;top:256px;font-size:4.70px;color:#8c9bbb;font-weight:bold;letter-spacing:0.000px;">12h</div>
<div class="t" style="left:883.6px;top:207px;font-size:4.70px;color:#8c9bbb;font-weight:bold;letter-spacing:0.000px;">23h</div>
<div class="t" style="left:883.6px;top:256px;font-size:4.70px;color:#8c9bbb;font-weight:bold;letter-spacing:0.000px;">13h</div>
<div class="t" style="left:919.1px;top:207px;font-size:4.70px;color:#8c9bbb;font-weight:bold;letter-spacing:0.000px;">0h</div>
<div class="t" style="left:917.8px;top:256px;font-size:4.70px;color:#8c9bbb;font-weight:bold;letter-spacing:0.000px;">14h</div>
<div class="t" style="left:953.4px;top:207px;font-size:4.70px;color:#8c9bbb;font-weight:bold;letter-spacing:0.000px;">1h</div>
<div class="t" style="left:952.1px;top:256px;font-size:4.70px;color:#8c9bbb;font-weight:bold;letter-spacing:0.000px;">15h</div>
<div class="t" style="left:164.6px;top:256px;font-size:4.70px;color:#8c9bbb;font-weight:bold;letter-spacing:-0.000px;">16h</div>
<div class="a" style="left:242.4px;top:213.6px;width:6.8px;height:15.4px;background:rgba(90,110,170,0.45);border-radius:1.2px;box-shadow:inset 0 0 0 0.6px rgba(255,255,255,0.6);"></div>
<svg style="left:0;top:0" width="1024" height="680"><text x="245.80" y="221.30" transform="rotate(90 245.80 221.30)" text-anchor="middle" dy="0.31em" font-family="Liberation Mono, monospace" font-weight="bold" font-size="4.3" fill="#fff">18:30</text></svg>
<div class="a" style="left:242.4px;top:237.0px;width:6.8px;height:15.2px;background:rgba(90,110,170,0.45);border-radius:1.2px;box-shadow:inset 0 0 0 0.6px rgba(255,255,255,0.6);"></div>
<svg style="left:0;top:0" width="1024" height="680"><text x="245.80" y="244.60" transform="rotate(90 245.80 244.60)" text-anchor="middle" dy="0.31em" font-family="Liberation Mono, monospace" font-weight="bold" font-size="4.3" fill="#fff">11:30</text></svg>
<div class="a" style="left:258.3px;top:213.6px;width:6.8px;height:15.4px;background:rgba(10,10,60,0.22);border-radius:1.2px;box-shadow:inset 0 0 0 0.6px rgba(255,255,255,0.55);"></div>
<svg style="left:0;top:0" width="1024" height="680"><text x="261.70" y="221.30" transform="rotate(90 261.70 221.30)" text-anchor="middle" dy="0.31em" font-family="Liberation Mono, monospace" font-weight="bold" font-size="4.3" fill="#fff">18:57</text></svg>
<div class="a" style="left:258.3px;top:237.0px;width:6.8px;height:15.2px;background:rgba(10,10,60,0.22);border-radius:1.2px;box-shadow:inset 0 0 0 0.6px rgba(255,255,255,0.55);"></div>
<svg style="left:0;top:0" width="1024" height="680"><text x="261.70" y="244.60" transform="rotate(90 261.70 244.60)" text-anchor="middle" dy="0.31em" font-family="Liberation Mono, monospace" font-weight="bold" font-size="4.3" fill="#fff">11:57</text></svg>
<div class="a" style="left:276.4px;top:213.6px;width:6.8px;height:15.4px;background:rgba(10,10,60,0.22);border-radius:1.2px;box-shadow:inset 0 0 0 0.6px rgba(255,255,255,0.55);"></div>
<svg style="left:0;top:0" width="1024" height="680"><text x="279.80" y="221.30" transform="rotate(90 279.80 221.30)" text-anchor="middle" dy="0.31em" font-family="Liberation Mono, monospace" font-weight="bold" font-size="4.3" fill="#fff">19:27</text></svg>
<div class="a" style="left:276.4px;top:237.0px;width:6.8px;height:15.2px;background:rgba(10,10,60,0.22);border-radius:1.2px;box-shadow:inset 0 0 0 0.6px rgba(255,255,255,0.55);"></div>
<svg style="left:0;top:0" width="1024" height="680"><text x="279.80" y="244.60" transform="rotate(90 279.80 244.60)" text-anchor="middle" dy="0.31em" font-family="Liberation Mono, monospace" font-weight="bold" font-size="4.3" fill="#fff">12:27</text></svg>
<div class="a" style="left:294.4px;top:213.6px;width:6.8px;height:15.4px;background:rgba(10,10,60,0.22);border-radius:1.2px;box-shadow:inset 0 0 0 0.6px rgba(255,255,255,0.55);"></div>
<svg style="left:0;top:0" width="1024" height="680"><text x="297.80" y="221.30" transform="rotate(90 297.80 221.30)" text-anchor="middle" dy="0.31em" font-family="Liberation Mono, monospace" font-weight="bold" font-size="4.3" fill="#fff">19:58</text></svg>
<div class="a" style="left:294.4px;top:237.0px;width:6.8px;height:15.2px;background:rgba(10,10,60,0.22);border-radius:1.2px;box-shadow:inset 0 0 0 0.6px rgba(255,255,255,0.55);"></div>
<svg style="left:0;top:0" width="1024" height="680"><text x="297.80" y="244.60" transform="rotate(90 297.80 244.60)" text-anchor="middle" dy="0.31em" font-family="Liberation Mono, monospace" font-weight="bold" font-size="4.3" fill="#fff">12:58</text></svg>
<div class="a" style="left:629.9px;top:213.6px;width:6.8px;height:15.4px;background:rgba(10,10,60,0.22);border-radius:1.2px;box-shadow:inset 0 0 0 0.6px rgba(255,255,255,0.55);"></div>
<svg style="left:0;top:0" width="1024" height="680"><text x="633.30" y="221.30" transform="rotate(90 633.30 221.30)" text-anchor="middle" dy="0.31em" font-family="Liberation Mono, monospace" font-weight="bold" font-size="4.3" fill="#fff">14:28</text></svg>
<div class="a" style="left:629.9px;top:237.0px;width:6.8px;height:15.2px;background:rgba(10,10,60,0.22);border-radius:1.2px;box-shadow:inset 0 0 0 0.6px rgba(255,255,255,0.55);"></div>
<svg style="left:0;top:0" width="1024" height="680"><text x="633.30" y="244.60" transform="rotate(90 633.30 244.60)" text-anchor="middle" dy="0.31em" font-family="Liberation Mono, monospace" font-weight="bold" font-size="4.3" fill="#fff">05:33</text></svg>
<div class="a" style="left:647.9px;top:213.6px;width:6.8px;height:15.4px;background:rgba(10,10,60,0.22);border-radius:1.2px;box-shadow:inset 0 0 0 0.6px rgba(255,255,255,0.55);"></div>
<svg style="left:0;top:0" width="1024" height="680"><text x="651.30" y="221.30" transform="rotate(90 651.30 221.30)" text-anchor="middle" dy="0.31em" font-family="Liberation Mono, monospace" font-weight="bold" font-size="4.3" fill="#fff">14:11</text></svg>
<div class="a" style="left:647.9px;top:237.0px;width:6.8px;height:15.2px;background:rgba(10,10,60,0.22);border-radius:1.2px;box-shadow:inset 0 0 0 0.6px rgba(255,255,255,0.55);"></div>
<svg style="left:0;top:0" width="1024" height="680"><text x="651.30" y="244.60" transform="rotate(90 651.30 244.60)" text-anchor="middle" dy="0.31em" font-family="Liberation Mono, monospace" font-weight="bold" font-size="4.3" fill="#fff">06:04</text></svg>
<div class="a" style="left:666.2px;top:213.6px;width:6.8px;height:15.4px;background:rgba(10,10,60,0.22);border-radius:1.2px;box-shadow:inset 0 0 0 0.6px rgba(255,255,255,0.55);"></div>
<svg style="left:0;top:0" width="1024" height="680"><text x="669.60" y="221.30" transform="rotate(90 669.60 221.30)" text-anchor="middle" dy="0.31em" font-family="Liberation Mono, monospace" font-weight="bold" font-size="4.3" fill="#fff">14:42</text></svg>
<div class="a" style="left:666.2px;top:237.0px;width:6.8px;height:15.2px;background:rgba(10,10,60,0.22);border-radius:1.2px;box-shadow:inset 0 0 0 0.6px rgba(255,255,255,0.55);"></div>
<svg style="left:0;top:0" width="1024" height="680"><text x="669.60" y="244.60" transform="rotate(90 669.60 244.60)" text-anchor="middle" dy="0.31em" font-family="Liberation Mono, monospace" font-weight="bold" font-size="4.3" fill="#fff">06:34</text></svg>
<div class="a" style="left:681.6px;top:213.6px;width:6.8px;height:15.4px;background:rgba(90,110,170,0.45);border-radius:1.2px;box-shadow:inset 0 0 0 0.6px rgba(255,255,255,0.6);"></div>
<svg style="left:0;top:0" width="1024" height="680"><text x="685.00" y="221.30" transform="rotate(90 685.00 221.30)" text-anchor="middle" dy="0.31em" font-family="Liberation Mono, monospace" font-weight="bold" font-size="4.3" fill="#fff">15:08</text></svg>
<div class="a" style="left:681.6px;top:237.0px;width:6.8px;height:15.2px;background:rgba(90,110,170,0.45);border-radius:1.2px;box-shadow:inset 0 0 0 0.6px rgba(255,255,255,0.6);"></div>
<svg style="left:0;top:0" width="1024" height="680"><text x="685.00" y="244.60" transform="rotate(90 685.00 244.60)" text-anchor="middle" dy="0.31em" font-family="Liberation Mono, monospace" font-weight="bold" font-size="4.3" fill="#fff">07:01</text></svg>
<div class="a" style="left:172.3px;top:213.0px;width:28.1px;height:8.1px;background:#f4f7fd;border-radius:1.5px;box-shadow:inset 0 0 0 0.7px #8d97ad;"></div>
<div class="t" style="left:174.3px;top:214px;font-size:6.40px;color:#6a7286;transform-origin:0 50%;transform:scaleX(0.8612);">LMST</div>
<svg style="left:193.1px;top:216.1px;" width="4.4" height="2.2" viewBox="0 0 4.4 2.2"><path d="M0.2 0.2 L2.2 1.9000000000000001 L4.2 0.2" fill="none" stroke="#6a7286" stroke-width="0.7"/></svg>
<div class="a" style="left:172.3px;top:244.8px;width:28.1px;height:7.8px;background:#f4f7fd;border-radius:1.5px;box-shadow:inset 0 0 0 0.7px #8d97ad;"></div>
<div class="t" style="left:174.3px;top:246px;font-size:6.40px;color:#6a7286;letter-spacing:-0.120px;">Local</div>
<svg style="left:193.1px;top:247.8px;" width="4.4" height="2.2" viewBox="0 0 4.4 2.2"><path d="M0.2 0.2 L2.2 1.9000000000000001 L4.2 0.2" fill="none" stroke="#6a7286" stroke-width="0.7"/></svg>
<div class="a" style="left:170.4px;top:224.0px;width:5.2px;height:18.4px;background:#fff;border-radius:0.8px;"></div>
<svg style="left:0;top:0" width="1024" height="680"><text x="173" y="233.2" transform="rotate(-90 173 233.2)" text-anchor="middle" dy="0.36em" font-family="Liberation Sans, sans-serif" font-style="italic" font-size="4.5" fill="#333">Airmass</text></svg>
<div class="a" style="left:900.6px;top:213.6px;width:62.8px;height:8.4px;background:#f7f9fe;border-radius:1.5px;box-shadow:inset 0 0 0 0.7px #9aa3b8;"></div>
<div class="t" style="left:902.6px;top:215px;font-size:6.10px;color:#7a8296;letter-spacing:0.028px;">Airmass &amp; Altitude</div>
<svg style="left:955.8px;top:216.9px;" width="4.4" height="2.2" viewBox="0 0 4.4 2.2"><path d="M0.2 0.2 L2.2 1.9000000000000001 L4.2 0.2" fill="none" stroke="#6a7286" stroke-width="0.7"/></svg>
<div class="a" style="left:957.0px;top:224.0px;width:5.4px;height:19.6px;background:#fff;border-radius:0.8px;"></div>
<svg style="left:0;top:0" width="1024" height="680"><text x="959.7" y="233.8" transform="rotate(-90 959.7 233.8)" text-anchor="middle" dy="0.36em" font-family="Liberation Sans, sans-serif" font-style="italic" font-size="4.5" fill="#333">Altitude</text></svg>
<div class="a" style="left:572.7px;top:216.8px;width:15.9px;height:6.5px;background:#fdf6ec;border-radius:1.2px;box-shadow:inset 0 0 0 0.7px #e8952e;"></div>
<div class="t" style="left:575.1px;top:219px;font-size:4.40px;color:#222;font-weight:bold;letter-spacing:0.000px;">M101</div>
<div class="a" style="left:912.9px;top:246.0px;width:17.1px;height:7.4px;background:#fffaf2;border-radius:1.4px;box-shadow:inset 0 0 0 0.9px #f0a02e;"></div>
<div class="t" style="left:915.6px;top:248px;font-size:4.60px;color:#222;font-weight:bold;letter-spacing:0.000px;">M101</div>
<div class="a" style="left:412.6px;top:244.8px;width:60.0px;height:7.8px;background:rgba(170,168,205,0.55);border-radius:1px;box-shadow:inset 0 0 0 0.6px rgba(230,230,250,0.8);"></div>
<div class="t" style="left:415.1px;top:248px;font-size:4.90px;color:#fff;letter-spacing:-0.120px;">2026-02-26 — 2026-02-27</div>
<div class="a" style="left:548.3px;top:244.3px;width:34.2px;height:7.4px;background:#dcd3f2;border-radius:1px;"></div>
<div class="t" style="left:549.9px;top:247px;font-size:5.20px;color:#5a3ea6;font-weight:bold;font-family:'Liberation Mono',monospace;transform-origin:0 50%;transform:scaleX(0.9031);">Time Locked</div>
<svg style="left:848.6px;top:213.2px;" width="8" height="11" viewBox="0 0 8 11"><path d="M0.6 0.6 V9 L2.6 7.2 L4 10.4 L5.4 9.8 L4 6.7 H6.8 Z" fill="#fff" stroke="#222" stroke-width="0.7" stroke-linejoin="round"/></svg>
<div class="a" style="left:154.6px;top:262.4px;width:822.4px;height:16.6px;background:#f1f3fb;"></div>
<svg style="left:160.6px;top:267.1px;" width="7.6" height="7.6" viewBox="0 0 7.6 7.6"><g transform="translate(3.8 3.8) scale(0.9)"><circle r="2.3" fill="none" stroke="#3a3a3a" stroke-width="1.3"/><g stroke="#3a3a3a" stroke-width="1.3"><path d="M0 -4 V-2.4 M0 4 V2.4 M-4 0 H-2.4 M4 0 H2.4 M-2.83 -2.83 L-1.7 -1.7 M2.83 2.83 L1.7 1.7 M-2.83 2.83 L-1.7 1.7 M2.83 -2.83 L1.7 -1.7"/></g></g></svg>
<div class="a" style="left:180.8px;top:264.6px;width:14.7px;height:12.8px;background:#fbfcff;border-radius:2px;"></div>
<svg style="left:185.4px;top:268.2px;" width="5.6" height="5.6" viewBox="0 0 5.6 5.6"><path d="M4.9 2.8 A2.1 2.1 0 1 1 3.9 1" fill="none" stroke="#888" stroke-width="0.7"/><path d="M3.4 0 L4.6 1 L3.6 2" fill="none" stroke="#888" stroke-width="0.7"/></svg>
<svg style="left:205.0px;top:271.0px;" width="1" height="1" viewBox="0 0 1 1"><path d="M0 -2.6 Q0.5 -0.5 2.6 0 Q0.5 0.5 0 2.6 Q-0.5 0.5 -2.6 0 Q-0.5 -0.5 0 -2.6 Z" fill="#b67af0"/></svg>
<div class="a" style="left:210.9px;top:266.3px;width:15.6px;height:9.5px;background:#c9c9cf;border-radius:4.8px;"></div>
<svg style="left:211.90px;top:267.20px;" width="7.70" height="7.70" viewBox="0 0 7.70 7.70"><ellipse cx="3.85" cy="3.85" rx="3.85" ry="3.85" fill="#fff"/></svg>
<div class="a" style="left:231.8px;top:269.0px;width:4.4px;height:3.8px;background:none;border-radius:0.6px;box-shadow:inset 0 0 0 0.8px #b67af0;"></div>
<div class="a" style="left:240.2px;top:270.5px;width:91.8px;height:1.1px;background:#3c9ee6;border-radius:0.5px;"></div>
<div class="a" style="left:332.0px;top:270.6px;width:91.8px;height:0.9px;background:#dfe1ea;border-radius:0.5px;"></div>
<svg style="left:328.20px;top:267.20px;" width="7.60" height="7.60" viewBox="0 0 7.60 7.60"><ellipse cx="3.80" cy="3.80" rx="4.40" ry="4.40" fill="rgba(0,0,0,0.45)" style="filter:blur(0.8px)"/><ellipse cx="3.80" cy="3.80" rx="3.80" ry="3.80" fill="#fff"/></svg>
<div class="t" style="left:428.0px;top:269px;font-size:5.40px;color:#b57af0;letter-spacing:-0.183px;">24.0h</div>
<div class="a" style="left:61.9px;top:279.0px;width:915.1px;height:4.4px;background:#e9ecf6;"></div>
<!-- ===== sec_left ===== -->
<div class="a" style="left:61.9px;top:281.0px;width:915.1px;height:35.0px;background:#fbfcff;"></div>
<div class="a" style="left:61.9px;top:279.0px;width:92.7px;height:2.0px;background:#fff;"></div>
<div class="a" style="left:61.9px;top:316.0px;width:915.1px;height:0.8px;background:#dbe4f6;"></div>
<div class="a" style="left:61.9px;top:316.8px;width:915.1px;height:290.8px;background:#f7f8fd;"></div>
<div class="a" style="left:66.6px;top:290.2px;width:72.0px;height:17.1px;background:#fdfdff;border-radius:3px;box-shadow:inset 0 0 0 0.8px #d4d8e4;"></div>
<svg style="left:75.1px;top:299.0px;" width="1" height="1" viewBox="0 0 1 1"><path d="M0 -4.0 Q1.12 -1.12 4.0 0 Q1.12 1.12 0 4.0 Q-1.12 1.12 -4.0 0 Q-1.12 -1.12 0 -4.0 Z" fill="#f4bf45" stroke="#f9e0a2" stroke-width="0.4"/></svg>
<div class="t" style="left:82.0px;top:296px;font-size:7.40px;color:#444;transform-origin:0 50%;transform:scaleX(0.8157);">M101</div>
<div class="t" style="left:99.6px;top:297px;font-size:5.60px;color:#3db55c;font-weight:bold;letter-spacing:0.133px;">(75.7°)</div>
<svg style="left:127.4px;top:297.8px;" width="5.8" height="2.9" viewBox="0 0 5.8 2.9"><path d="M0.2 0.2 L2.9 2.6 L5.6 0.2" fill="none" stroke="#888" stroke-width="0.8"/></svg>
<div class="a" style="left:143.0px;top:290.2px;width:41.5px;height:17.1px;background:#f0f2f9;border-radius:3px;"></div>
<svg style="left:151.6px;top:299.0px;" width="1" height="1" viewBox="0 0 1 1"><path d="M0 -4.0 Q1.12 -1.12 4.0 0 Q1.12 1.12 0 4.0 Q-1.12 1.12 -4.0 0 Q-1.12 -1.12 0 -4.0 Z" fill="#f4bf45" stroke="#f9e0a2" stroke-width="0.4"/></svg>
<div class="t" style="left:160.8px;top:296px;font-size:7.40px;color:#444;letter-spacing:-0.294px;">New...</div>
<div class="t" style="left:188.7px;top:291px;font-size:6.20px;color:#9a9a9a;letter-spacing:-0.232px;">R.A. (h)</div>
<div class="t" style="left:210.9px;top:291px;font-size:6.30px;color:#2a2a2a;font-weight:bold;letter-spacing:-0.217px;">14h 3m 12.583s</div>
<div class="t" style="left:188.7px;top:302px;font-size:6.20px;color:#9a9a9a;letter-spacing:-0.097px;">Dec. (°)</div>
<div class="t" style="left:210.9px;top:302px;font-size:6.30px;color:#2a2a2a;font-weight:bold;letter-spacing:-0.051px;">+54° 20&#x27; 55.50&quot;</div>
<div class="t" style="left:259.0px;top:296px;font-size:6.00px;color:#9a9a9a;letter-spacing:0.138px;">Magnitudes:</div>
<svg style="left:298.40px;top:296.20px;" width="5.60" height="5.60" viewBox="0 0 5.60 5.60"><ellipse cx="2.80" cy="2.80" rx="2.80" ry="2.80" fill="#2d80e2"/></svg>
<div class="t" style="left:300.6px;top:298px;font-size:4.40px;color:#fff;font-weight:bold;letter-spacing:0.000px;">i</div>
<div class="t" style="left:309.5px;top:286px;font-size:6.05px;color:#4a4a4a;"><b style="color:#222">z</b> = 10.883, <b style="color:#222">i</b> = 11.237, <b style="color:#222">r</b> = 11.529, <b style="color:#222">g</b> = 12.219,</div>
<div class="t" style="left:309.5px;top:296px;font-size:6.05px;color:#4a4a4a;"><b style="color:#222">u</b> = 13.671, <b style="color:#222">K</b> = 5.512, <b style="color:#222">H</b> = 5.805, <b style="color:#222">J</b> = 6.517,</div>
<div class="t" style="left:309.5px;top:306px;font-size:6.05px;color:#4a4a4a;"><b style="color:#222">R</b> = 7.760, <b style="color:#222">V</b> = 7.860, <b style="color:#222">B</b> = 8.460,</div>
<div class="a" style="left:629.8px;top:294.6px;width:5.2px;height:7.2px;background:#2f6a4a;border-radius:0.8px;box-shadow:inset 0 0 0 0.6px #1c3f2c;"></div>
<div class="a" style="left:630.8px;top:298.8px;width:3.2px;height:1.3px;background:#bcd6c6;"></div>
<div class="t" style="left:638.0px;top:289px;font-size:7.30px;color:#3c84c8;letter-spacing:0.006px;">2026-02-26</div>
<div class="a" style="left:638.0px;top:299.0px;width:38.2px;height:6.8px;background:#fff;border-radius:1px;box-shadow:inset 0 0 0 0.6px #b5b5b5;"></div>
<div class="t" style="left:640.0px;top:302px;font-size:3.60px;color:#999;font-family:'Liberation Mono',monospace;letter-spacing:0.106px;">f232f2fd-0239-…</div>
<svg style="left:863.70px;top:295.00px;" width="8.00" height="8.00" viewBox="0 0 8.00 8.00"><ellipse cx="4.00" cy="4.00" rx="4.00" ry="4.00" fill="#fbf0dc"/></svg>
<svg style="left:863.7px;top:295.0px;" width="8" height="8" viewBox="0 0 8 8"><path d="M1.6 3.4 Q4 1 6.4 3.4 Z" fill="#e8952e"/><rect x="1.4" y="3.8" width="5.2" height="1" fill="#3a2a1e"/><rect x="1.4" y="5.2" width="5.2" height="1.2" rx="0.6" fill="#e8952e"/></svg>
<div class="t" style="left:873.5px;top:289px;font-size:7.30px;color:#3c84c8;letter-spacing:-0.026px;">(Console 2026-02-24)</div>
<div class="a" style="left:873.5px;top:299.0px;width:38.8px;height:6.8px;background:#fff;border-radius:1px;box-shadow:inset 0 0 0 0.6px #b5b5b5;"></div>
<div class="t" style="left:875.4px;top:302px;font-size:3.60px;color:#999;font-family:'Liberation Mono',monospace;letter-spacing:0.146px;">69c7bd11-444c-…</div>
<svg style="left:949.2px;top:296.2px;" width="6" height="6" viewBox="0 0 6 6"><path d="M0.4 5.6 L0.8 4 L4.2 0.6 L5.4 1.8 L2 5.2 Z" fill="#333"/></svg>
<div class="a" style="left:960.0px;top:292.0px;width:13.2px;height:13.8px;background:#3c9ee6;border-radius:2.2px;"></div>
<svg style="left:964.3px;top:296.6px;" width="4.6" height="4.6" viewBox="0 0 4.6 4.6"><path d="M2.3 0 V4.6 M0 2.3 H4.6" stroke="#fff" stroke-width="1"/></svg>
<div class="a" style="left:66.6px;top:312.0px;width:312.2px;height:55.8px;background:#fbfbfe;border-radius:0 0 3px 3px;box-shadow:inset 0 0 0 0.8px #7c7c80;clip-path:inset(4.9px 0 0 0);"></div>
<div class="a" style="left:67.4px;top:316.8px;width:310.6px;height:4.8px;background:#f3f5fb;"></div>
<div class="a" style="left:67.4px;top:321.6px;width:310.6px;height:0.6px;background:#e4e7f0;"></div>
<div class="t" style="left:70.3px;top:329px;font-size:6.50px;color:#444;letter-spacing:-0.170px;">Active Tasks:</div>
<svg style="left:112.4px;top:329.7px;" width="3.6" height="3.6" viewBox="0 0 3.6 3.6"><path d="M0 0 L3.6 3.6 M3.6 0 L0 3.6" stroke="#3c9ee6" stroke-width="0.8"/></svg>
<div class="a" style="left:69.8px;top:340.4px;width:95.6px;height:8.4px;background:#f4f0fd;border-radius:1px;"></div>
<div class="t" style="left:71.5px;top:343px;font-size:5.30px;color:#6a3fc4;font-family:'Liberation Mono',monospace;letter-spacing:-0.203px;">Enclosure : connect : completed</div>
<div class="a" style="left:170.0px;top:340.4px;width:113.4px;height:8.4px;background:#f4f0fd;border-radius:1px;"></div>
<div class="t" style="left:171.6px;top:343px;font-size:5.30px;color:#6a3fc4;font-family:'Liberation Mono',monospace;letter-spacing:-0.205px;">Enclosure : close_shutter : completed</div>
<div class="a" style="left:69.8px;top:354.8px;width:110.8px;height:8.4px;background:#f4f0fd;border-radius:1px;"></div>
<div class="t" style="left:71.5px;top:358px;font-size:5.30px;color:#6a3fc4;font-family:'Liberation Mono',monospace;letter-spacing:-0.197px;">Enclosure : open_shutter : completed</div>
<div class="a" style="left:66.6px;top:373.5px;width:312.2px;height:179.1px;background:#fff;border-radius:3px 3px 0 0;box-shadow:inset 0.8px 0 0 0 #77777c, inset -0.8px 0 0 0 #77777c;"></div>
<div class="a" style="left:66.6px;top:373.5px;width:312.2px;height:24.5px;background:#1b2454;border-radius:3px 3px 0 0;"></div>
<div class="a" style="left:71.5px;top:381.8px;width:8.0px;height:7.8px;background:#f4e9ea;border-radius:1.8px;"></div>
<svg style="left:71.5px;top:381.8px;" width="8" height="7.8" viewBox="0 0 8 7.8"><path d="M1.6 6 L6.3 1.8" stroke="#9c1f24" stroke-width="2.2" stroke-linecap="round"/></svg>
<div class="t" style="left:82.7px;top:382px;font-size:8.70px;color:#fff;transform-origin:0 50%;transform:scaleX(0.8957);">Dome Telescope</div>
<div class="a" style="left:143.0px;top:381.6px;width:95.2px;height:8.5px;background:#4b547c;border-radius:1px;"></div>
<div class="t" style="left:145.0px;top:384px;font-size:4.70px;color:#7f88ac;font-family:'Liberation Mono',monospace;transform-origin:0 50%;transform:scaleX(0.9002);">ca53fd52-c81c-4458-8bcd-39233d7d77c1</div>
<svg style="left:245.20px;top:382.70px;" width="5.60" height="5.60" viewBox="0 0 5.60 5.60"><ellipse cx="2.80" cy="2.80" rx="2.80" ry="2.80" fill="#3c9ee6"/></svg>
<div class="t" style="left:247.4px;top:384px;font-size:4.20px;color:#1b2454;font-weight:bold;letter-spacing:-0.000px;">i</div>
<div class="a" style="left:258.2px;top:380.4px;width:39.1px;height:11.2px;background:#e9ecf3;border-radius:2.5px;"></div>
<svg style="left:261.20px;top:383.80px;" width="4.40" height="4.40" viewBox="0 0 4.40 4.40"><ellipse cx="2.20" cy="2.20" rx="2.20" ry="2.20" fill="#4cc265"/></svg>
<div class="t" style="left:269.2px;top:384px;font-size:5.30px;color:#333;font-weight:bold;transform-origin:0 50%;transform:scaleX(0.8821);">Disconnect</div>
<div class="a" style="left:365.6px;top:385.2px;width:6.3px;height:0.8px;background:#56608e;"></div>
<div class="a" style="left:69.4px;top:400.9px;width:305.4px;height:15.2px;background:#eaf0fd;border-radius:3px;box-shadow:inset 0 0 0 0.7px #cfdcf8;"></div>
<div class="t" style="left:75.2px;top:406px;font-size:6.30px;color:#2f62d8;letter-spacing:-0.102px;">Telescope is 70.4° away from M101. Estimated slewing time: ?? seconds.</div>
<div class="a" style="left:69.4px;top:419.4px;width:305.4px;height:14.6px;background:#e9f7ee;border-radius:3px;box-shadow:inset 0 0 0 0.7px #cdebd8;"></div>
<div class="t" style="left:75.2px;top:424px;font-size:6.30px;color:#2e9e55;letter-spacing:-0.134px;">M101 altitude (74.5°) is OK.</div>
<div class="t" style="left:73.3px;top:445px;font-size:6.10px;color:#ababab;letter-spacing:-0.108px;">R.A. (Hours)</div>
<div class="t" style="left:157.3px;top:445px;font-size:6.20px;color:#333;font-weight:bold;letter-spacing:-0.250px;">14h 3m 1.724s</div>
<div class="t" style="left:73.3px;top:456px;font-size:6.10px;color:#ababab;letter-spacing:-0.068px;">Dec. (Degrees)</div>
<div class="t" style="left:154.3px;top:456px;font-size:6.20px;color:#333;font-weight:bold;letter-spacing:-0.098px;">+54° 20&#x27; 46.13&quot;</div>
<div class="t" style="left:73.3px;top:469px;font-size:6.10px;color:#ababab;letter-spacing:-0.009px;">Azimuth (Degrees)</div>
<div class="t" style="left:169.4px;top:469px;font-size:6.20px;color:#333;font-weight:bold;transform-origin:0 50%;transform:scaleX(0.9110);">15.180195</div>
<div class="t" style="left:73.3px;top:480px;font-size:6.10px;color:#ababab;letter-spacing:0.024px;">Altitude (Degrees)</div>
<div class="t" style="left:167.0px;top:481px;font-size:6.20px;color:#333;font-weight:bold;letter-spacing:-0.023px;">75.773425</div>
<div class="a" style="left:73.0px;top:491.3px;width:123.0px;height:11.7px;background:#ebe5fb;border-radius:2px;"></div>
<div class="t" style="left:109.6px;top:495px;font-size:5.70px;color:#5b35c8;font-weight:bold;letter-spacing:0.080px;">Side of Pier: West</div>
<div class="a" style="left:73.0px;top:506.4px;width:31.2px;height:11.3px;background:#ebe5fb;border-radius:2px;"></div>
<div class="t" style="left:76.9px;top:510px;font-size:5.70px;color:#5b35c8;font-weight:bold;letter-spacing:0.120px;">Tracking</div>
<div class="a" style="left:107.1px;top:506.4px;width:40.6px;height:11.3px;background:#ebe5fb;border-radius:2px;"></div>
<div class="t" style="left:111.0px;top:510px;font-size:5.70px;color:#5b35c8;font-weight:bold;letter-spacing:0.062px;">Not Slewing</div>
<div class="a" style="left:73.0px;top:521.0px;width:55.6px;height:11.3px;background:#ebe5fb;border-radius:2px;"></div>
<div class="t" style="left:76.9px;top:525px;font-size:5.70px;color:#5b35c8;font-weight:bold;letter-spacing:-0.035px;">Not Pulse Guiding</div>
<div class="a" style="left:132.5px;top:521.0px;width:37.6px;height:11.3px;background:#ebe5fb;border-radius:2px;"></div>
<div class="t" style="left:136.4px;top:525px;font-size:5.70px;color:#5b35c8;font-weight:bold;letter-spacing:0.106px;">Not AtPark</div>
<div class="a" style="left:73.0px;top:535.7px;width:40.5px;height:12.3px;background:#ebe5fb;border-radius:2px;"></div>
<div class="t" style="left:76.9px;top:540px;font-size:5.70px;color:#5b35c8;font-weight:bold;letter-spacing:0.098px;">Not AtHome</div>
<svg style="left:0;top:0" width="1024" height="680" viewBox="0 0 1024 680"><circle cx="289.6" cy="495.2" r="45" fill="#150a5e"/><path d="M332.60 495.20 L334.60 495.20" stroke="rgba(255,255,255,0.55)" stroke-width="0.5"/><path d="M331.95 502.67 L333.92 503.01" stroke="rgba(255,255,255,0.55)" stroke-width="0.5"/><path d="M330.01 509.91 L331.89 510.59" stroke="rgba(255,255,255,0.55)" stroke-width="0.5"/><path d="M326.84 516.70 L328.57 517.70" stroke="rgba(255,255,255,0.55)" stroke-width="0.5"/><path d="M322.54 522.84 L324.07 524.13" stroke="rgba(255,255,255,0.55)" stroke-width="0.5"/><path d="M317.24 528.14 L318.53 529.67" stroke="rgba(255,255,255,0.55)" stroke-width="0.5"/><path d="M311.10 532.44 L312.10 534.17" stroke="rgba(255,255,255,0.55)" stroke-width="0.5"/><path d="M304.31 535.61 L304.99 537.49" stroke="rgba(255,255,255,0.55)" stroke-width="0.5"/><path d="M297.07 537.55 L297.41 539.52" stroke="rgba(255,255,255,0.55)" stroke-width="0.5"/><path d="M289.60 538.20 L289.60 540.20" stroke="rgba(255,255,255,0.55)" stroke-width="0.5"/><path d="M282.13 537.55 L281.79 539.52" stroke="rgba(255,255,255,0.55)" stroke-width="0.5"/><path d="M274.89 535.61 L274.21 537.49" stroke="rgba(255,255,255,0.55)" stroke-width="0.5"/><path d="M268.10 532.44 L267.10 534.17" stroke="rgba(255,255,255,0.55)" stroke-width="0.5"/><path d="M261.96 528.14 L260.67 529.67" stroke="rgba(255,255,255,0.55)" stroke-width="0.5"/><path d="M256.66 522.84 L255.13 524.13" stroke="rgba(255,255,255,0.55)" stroke-width="0.5"/><path d="M252.36 516.70 L250.63 517.70" stroke="rgba(255,255,255,0.55)" stroke-width="0.5"/><path d="M249.19 509.91 L247.31 510.59" stroke="rgba(255,255,255,0.55)" stroke-width="0.5"/><path d="M247.25 502.67 L245.28 503.01" stroke="rgba(255,255,255,0.55)" stroke-width="0.5"/><path d="M246.60 495.20 L244.60 495.20" stroke="rgba(255,255,255,0.55)" stroke-width="0.5"/><path d="M247.25 487.73 L245.28 487.39" stroke="rgba(255,255,255,0.55)" stroke-width="0.5"/><path d="M249.19 480.49 L247.31 479.81" stroke="rgba(255,255,255,0.55)" stroke-width="0.5"/><path d="M252.36 473.70 L250.63 472.70" stroke="rgba(255,255,255,0.55)" stroke-width="0.5"/><path d="M256.66 467.56 L255.13 466.27" stroke="rgba(255,255,255,0.55)" stroke-width="0.5"/><path d="M261.96 462.26 L260.67 460.73" stroke="rgba(255,255,255,0.55)" stroke-width="0.5"/><path d="M268.10 457.96 L267.10 456.23" stroke="rgba(255,255,255,0.55)" stroke-width="0.5"/><path d="M274.89 454.79 L274.21 452.91" stroke="rgba(255,255,255,0.55)" stroke-width="0.5"/><path d="M282.13 452.85 L281.79 450.88" stroke="rgba(255,255,255,0.55)" stroke-width="0.5"/><path d="M289.60 452.20 L289.60 450.20" stroke="rgba(255,255,255,0.55)" stroke-width="0.5"/><path d="M297.07 452.85 L297.41 450.88" stroke="rgba(255,255,255,0.55)" stroke-width="0.5"/><path d="M304.31 454.79 L304.99 452.91" stroke="rgba(255,255,255,0.55)" stroke-width="0.5"/><path d="M311.10 457.96 L312.10 456.23" stroke="rgba(255,255,255,0.55)" stroke-width="0.5"/><path d="M317.24 462.26 L318.53 460.73" stroke="rgba(255,255,255,0.55)" stroke-width="0.5"/><path d="M322.54 467.56 L324.07 466.27" stroke="rgba(255,255,255,0.55)" stroke-width="0.5"/><path d="M326.84 473.70 L328.57 472.70" stroke="rgba(255,255,255,0.55)" stroke-width="0.5"/><path d="M330.01 480.49 L331.89 479.81" stroke="rgba(255,255,255,0.55)" stroke-width="0.5"/><path d="M331.95 487.73 L333.92 487.39" stroke="rgba(255,255,255,0.55)" stroke-width="0.5"/><path d="M244.6 495.2 H334.6 M289.4 450.2 V540.2" stroke="rgba(255,255,255,0.85)" stroke-width="0.7" stroke-dasharray="1.6 1.2"/><ellipse cx="289.6" cy="469.8" rx="20.9" ry="18.8" fill="none" stroke="#c97a22" stroke-width="0.9"/><path d="M257.6 487.2 Q272 501.6 289.4 502.1 Q309 501.8 321.6 486 Q327 478 327.3 470.4" fill="none" stroke="#f2f2f6" stroke-width="0.9"/><path d="M251.5 471.3 Q252 477 254.1 481.5" fill="none" stroke="#f2f2f6" stroke-width="0.7"/><circle cx="289.4" cy="470" r="2.2" fill="#b7b5dc"/><circle cx="325.2" cy="479.2" r="1.8" fill="#fff"/><path d="M287.1 480.5 V486" stroke="#c97a22" stroke-width="0.7"/><circle cx="287.2" cy="487.9" r="2.3" fill="#6cc04a"/><circle cx="286.5" cy="487.2" r="1" fill="#e6f6d8"/></svg>
<div class="a" style="left:278.8px;top:473.9px;width:17.3px;height:6.6px;background:#fff;border-radius:1.3px;box-shadow:inset 0 0 0 0.7px #a06a3a;"></div>
<div class="t" style="left:281.9px;top:476px;font-size:4.50px;color:#333;letter-spacing:-0.000px;">M101</div>
<div class="t" style="left:283.9px;top:446px;font-size:4.70px;color:#333;letter-spacing:-0.000px;">North</div>
<div class="t" style="left:234.2px;top:493px;font-size:4.70px;color:#333;letter-spacing:-0.151px;">East</div>
<div class="t" style="left:335.8px;top:493px;font-size:4.70px;color:#333;letter-spacing:-0.130px;">270°</div>
<div class="t" style="left:284.7px;top:541px;font-size:4.70px;color:#000;font-weight:bold;letter-spacing:0.000px;">180°</div>
<div class="a" style="left:361.7px;top:446.6px;width:11.5px;height:10.6px;background:#eef1f9;border-radius:2px;"></div>
<div class="a" style="left:361.7px;top:460.7px;width:11.5px;height:10.0px;background:#eef1f9;border-radius:2px;"></div>
<div class="a" style="left:361.7px;top:474.5px;width:11.5px;height:10.5px;background:#eef1f9;border-radius:2px;"></div>
<svg style="left:365.20px;top:449.60px;" width="4.60" height="4.60" viewBox="0 0 4.60 4.60"><ellipse cx="2.30" cy="2.30" rx="2.30" ry="2.30" fill="#222"/></svg>
<svg style="left:365.0px;top:462.9px;" width="5" height="5.6" viewBox="0 0 5 5.6"><path d="M1.3 5.4 V0.6 M0.2 1.8 L1.3 0.5 L2.4 1.8 M3.7 0.2 V5 M2.6 3.8 L3.7 5.1 L4.8 3.8" fill="none" stroke="#333" stroke-width="0.7"/></svg>
<svg style="left:365.1px;top:477.3px;" width="4.8" height="4.8" viewBox="0 0 4.8 4.8"><circle cx="2.4" cy="2.4" r="2" fill="none" stroke="#333" stroke-width="0.7"/><ellipse cx="2.4" cy="2.4" rx="0.9" ry="2" fill="none" stroke="#333" stroke-width="0.6"/><path d="M0.4 2.4 H4.4" stroke="#333" stroke-width="0.6"/></svg>
<div class="a" style="left:381.6px;top:316.8px;width:8.8px;height:235.6px;background:#f6f6f8;"></div>
<svg style="left:383.6px;top:320.8px;" width="4.8" height="3.4" viewBox="0 0 4.8 3.4"><path d="M0 3.4 L2.4 0 L4.8 3.4 Z" fill="#555"/></svg>
<svg style="left:383.6px;top:545.2px;" width="4.8" height="3.4" viewBox="0 0 4.8 3.4"><path d="M0 0 L2.4 3.4 L4.8 0 Z" fill="#555"/></svg>
<div class="a" style="left:383.2px;top:356.0px;width:5.4px;height:51.0px;background:#8b8b8b;border-radius:2.7px;"></div>
<!-- ===== sec_mid ===== -->
<div class="a" style="left:392.9px;top:316.8px;width:276.9px;height:235.6px;background:#fff;"></div>
<div class="a" style="left:392.9px;top:316.6px;width:276.9px;height:14.4px;background:#e9effc;"></div>
<div class="t" style="left:396.7px;top:322px;font-size:6.20px;color:#3f5aa8;letter-spacing:-0.039px;">Field preview only. Will soon give access to custom finding charts too.</div>
<div class="t" style="left:396.7px;top:336px;font-size:5.40px;color:#666;letter-spacing:-0.109px;">Focal Length:</div>
<div class="a" style="left:429.6px;top:334.9px;width:17.2px;height:6.0px;background:#fbe9ee;border-radius:1px;"></div>
<div class="t" style="left:430.4px;top:337px;font-size:3.90px;color:#d63a5e;font-weight:bold;font-family:'Liberation Mono',monospace;letter-spacing:-0.112px;">3.556mm</div>
<div class="t" style="left:449.5px;top:336px;font-size:5.40px;color:#666;letter-spacing:-0.148px;">Pixel Size (X/Y):</div>
<div class="a" style="left:487.8px;top:334.9px;width:26.4px;height:6.0px;background:#fbe9ee;border-radius:1px;"></div>
<div class="t" style="left:488.6px;top:337px;font-size:3.90px;color:#d63a5e;font-weight:bold;font-family:'Liberation Mono',monospace;letter-spacing:-0.086px;">3.76/3.76µm</div>
<div class="t" style="left:516.3px;top:336px;font-size:5.40px;color:#666;letter-spacing:-0.156px;">Camera Size (X/Y):</div>
<div class="a" style="left:562.0px;top:334.9px;width:26.0px;height:6.0px;background:#fbe9ee;border-radius:1px;"></div>
<div class="t" style="left:562.8px;top:337px;font-size:3.90px;color:#d63a5e;font-weight:bold;font-family:'Liberation Mono',monospace;letter-spacing:-0.122px;">6248/4176px</div>
<div class="t" style="left:590.7px;top:336px;font-size:5.40px;color:#666;letter-spacing:-0.200px;">FOV (Ra/Dec):</div>
<div class="a" style="left:625.6px;top:334.9px;width:24.0px;height:6.0px;background:#fbe9ee;border-radius:1px;"></div>
<div class="t" style="left:626.4px;top:337px;font-size:3.90px;color:#d63a5e;font-weight:bold;font-family:'Liberation Mono',monospace;letter-spacing:-0.100px;">22.7/15.2&#x27;</div>
<div class="t" style="left:396.7px;top:345px;font-size:5.40px;color:#666;letter-spacing:-0.126px;">Rotator:</div>
<div class="a" style="left:417.0px;top:343.7px;width:10.8px;height:6.0px;background:#fbe9ee;border-radius:1px;"></div>
<div class="t" style="left:417.8px;top:346px;font-size:3.90px;color:#d63a5e;font-weight:bold;font-family:'Liberation Mono',monospace;letter-spacing:-0.040px;">0.0°</div>
<svg style="left:393.4px;top:353.5px;" width="275.8" height="198.5" viewBox="0 0 275.8 198.5"><defs><filter id="gb1" x="-30%" y="-30%" width="160%" height="160%"><feGaussianBlur stdDeviation="1.3"/></filter><filter id="gb2" x="-30%" y="-30%" width="160%" height="160%"><feGaussianBlur stdDeviation="0.7"/></filter><filter id="gb3" x="-50%" y="-50%" width="200%" height="200%"><feGaussianBlur stdDeviation="0.35"/></filter><radialGradient id="gal"><stop offset="0" stop-color="#eef0fc" stop-opacity="0.95"/><stop offset="0.14" stop-color="#c3cce6" stop-opacity="0.8"/><stop offset="0.4" stop-color="#8a99be" stop-opacity="0.62"/><stop offset="0.72" stop-color="#5c6988" stop-opacity="0.36"/><stop offset="1" stop-color="#20283a" stop-opacity="0"/></radialGradient><clipPath id="skyc"><rect x="0" y="0" width="275.8" height="198.5"/></clipPath></defs><g clip-path="url(#skyc)"><rect width="275.8" height="198.5" fill="#040405"/><g filter="url(#gb3)"><circle cx="89.3" cy="29.9" r="0.45" fill="#ffffff" opacity="0.24"/><circle cx="26.0" cy="115.7" r="0.71" fill="#ffffff" opacity="0.32"/><circle cx="119.6" cy="13.9" r="0.30" fill="#ffffff" opacity="0.43"/><circle cx="34.1" cy="44.3" r="0.44" fill="#ffffff" opacity="0.72"/><circle cx="161.5" cy="9.8" r="0.31" fill="#ffffff" opacity="0.51"/><circle cx="79.9" cy="28.6" r="0.30" fill="#f0c890" opacity="0.37"/><circle cx="49.8" cy="115.4" r="0.44" fill="#ffffff" opacity="0.40"/><circle cx="196.4" cy="112.0" r="0.43" fill="#ffffff" opacity="0.47"/><circle cx="117.9" cy="62.4" r="0.41" fill="#dfe6ff" opacity="0.45"/><circle cx="68.5" cy="35.7" r="0.56" fill="#dfe6ff" opacity="0.25"/><circle cx="144.8" cy="173.7" r="0.51" fill="#ffffff" opacity="0.36"/><circle cx="32.6" cy="83.0" r="0.54" fill="#ffd9a8" opacity="0.28"/><circle cx="116.3" cy="191.0" r="0.30" fill="#dfe6ff" opacity="0.51"/><circle cx="93.8" cy="69.5" r="0.37" fill="#ffffff" opacity="0.64"/><circle cx="231.7" cy="187.5" r="0.36" fill="#ffffff" opacity="0.57"/><circle cx="201.7" cy="61.5" r="0.41" fill="#ffd9a8" opacity="0.57"/><circle cx="78.5" cy="76.6" r="0.46" fill="#ffd9a8" opacity="0.21"/><circle cx="98.0" cy="121.3" r="0.37" fill="#dfe6ff" opacity="0.32"/><circle cx="35.7" cy="49.2" r="0.33" fill="#ffffff" opacity="0.68"/><circle cx="45.9" cy="79.7" r="0.31" fill="#ffd9a8" opacity="0.28"/><circle cx="238.3" cy="55.3" r="0.34" fill="#ffd9a8" opacity="0.40"/><circle cx="264.1" cy="30.0" r="0.30" fill="#ffffff" opacity="0.33"/><circle cx="3.3" cy="165.0" r="0.30" fill="#ffffff" opacity="0.36"/><circle cx="115.5" cy="73.3" r="0.40" fill="#f0c890" opacity="0.72"/><circle cx="237.0" cy="188.6" r="0.45" fill="#ffd9a8" opacity="0.61"/><circle cx="248.1" cy="154.8" r="0.67" fill="#ffd9a8" opacity="0.64"/><circle cx="109.8" cy="78.2" r="0.36" fill="#ffffff" opacity="0.42"/><circle cx="18.6" cy="41.4" r="0.30" fill="#ffffff" opacity="0.39"/><circle cx="28.2" cy="112.5" r="0.38" fill="#ffffff" opacity="0.72"/><circle cx="7.0" cy="173.6" r="0.43" fill="#dfe6ff" opacity="0.28"/><circle cx="263.5" cy="119.6" r="0.36" fill="#ffd9a8" opacity="0.26"/><circle cx="273.9" cy="92.5" r="0.36" fill="#ffffff" opacity="0.25"/><circle cx="206.8" cy="147.0" r="0.36" fill="#ffffff" opacity="0.58"/><circle cx="6.4" cy="188.8" r="0.38" fill="#ffffff" opacity="0.28"/><circle cx="252.1" cy="150.5" r="0.31" fill="#ffffff" opacity="0.55"/><circle cx="192.0" cy="51.8" r="0.33" fill="#ffffff" opacity="0.29"/><circle cx="146.9" cy="154.6" r="0.32" fill="#ffffff" opacity="0.32"/><circle cx="222.3" cy="162.4" r="0.52" fill="#ffffff" opacity="0.32"/><circle cx="135.9" cy="145.1" r="0.83" fill="#ffd9a8" opacity="0.63"/><circle cx="71.5" cy="137.5" r="0.78" fill="#f0c890" opacity="0.45"/><circle cx="272.5" cy="189.6" r="0.33" fill="#ffffff" opacity="0.32"/><circle cx="129.6" cy="67.0" r="0.36" fill="#ffffff" opacity="0.74"/><circle cx="231.8" cy="95.2" r="0.45" fill="#ffffff" opacity="0.64"/><circle cx="230.2" cy="23.8" r="0.33" fill="#ffffff" opacity="0.59"/><circle cx="131.8" cy="35.4" r="0.57" fill="#f0c890" opacity="0.38"/><circle cx="109.2" cy="79.7" r="0.77" fill="#ffffff" opacity="0.60"/><circle cx="273.9" cy="5.5" r="0.41" fill="#f0c890" opacity="0.46"/><circle cx="40.3" cy="164.1" r="0.82" fill="#dfe6ff" opacity="0.56"/><circle cx="43.0" cy="108.8" r="0.30" fill="#f0c890" opacity="0.64"/><circle cx="179.2" cy="104.5" r="0.75" fill="#ffffff" opacity="0.44"/><circle cx="227.9" cy="41.9" r="0.31" fill="#ffffff" opacity="0.36"/><circle cx="210.6" cy="64.7" r="0.39" fill="#ffffff" opacity="0.66"/><circle cx="251.0" cy="70.2" r="0.35" fill="#ffffff" opacity="0.52"/><circle cx="116.0" cy="182.2" r="0.37" fill="#ffffff" opacity="0.49"/><circle cx="140.8" cy="173.3" r="0.56" fill="#ffffff" opacity="0.53"/><circle cx="47.5" cy="94.0" r="0.51" fill="#dfe6ff" opacity="0.51"/><circle cx="188.2" cy="105.3" r="0.36" fill="#ffffff" opacity="0.63"/><circle cx="15.7" cy="38.0" r="0.30" fill="#ffd9a8" opacity="0.25"/><circle cx="154.9" cy="150.9" r="0.72" fill="#ffffff" opacity="0.44"/><circle cx="268.5" cy="120.3" r="0.30" fill="#ffffff" opacity="0.35"/><circle cx="147.1" cy="94.9" r="0.76" fill="#dfe6ff" opacity="0.58"/><circle cx="254.5" cy="177.2" r="0.30" fill="#ffd9a8" opacity="0.45"/><circle cx="33.5" cy="87.8" r="0.30" fill="#ffffff" opacity="0.33"/><circle cx="58.7" cy="60.1" r="0.30" fill="#f0c890" opacity="0.63"/><circle cx="177.5" cy="72.7" r="0.31" fill="#ffd9a8" opacity="0.28"/><circle cx="60.6" cy="189.1" r="0.33" fill="#f0c890" opacity="0.47"/><circle cx="229.6" cy="32.1" r="0.34" fill="#dfe6ff" opacity="0.48"/><circle cx="116.2" cy="70.8" r="0.30" fill="#dfe6ff" opacity="0.40"/><circle cx="152.8" cy="87.4" r="0.30" fill="#ffffff" opacity="0.38"/><circle cx="81.5" cy="190.7" r="0.30" fill="#ffffff" opacity="0.71"/><circle cx="268.0" cy="20.8" r="0.31" fill="#ffffff" opacity="0.22"/><circle cx="74.6" cy="25.7" r="0.34" fill="#dfe6ff" opacity="0.70"/><circle cx="112.0" cy="106.5" r="0.38" fill="#dfe6ff" opacity="0.47"/><circle cx="24.7" cy="11.4" r="0.48" fill="#ffffff" opacity="0.43"/><circle cx="74.2" cy="3.3" r="0.30" fill="#ffffff" opacity="0.34"/><circle cx="236.1" cy="13.2" r="0.65" fill="#dfe6ff" opacity="0.45"/><circle cx="274.2" cy="82.9" r="0.72" fill="#ffffff" opacity="0.54"/><circle cx="145.3" cy="47.3" r="0.30" fill="#ffffff" opacity="0.29"/><circle cx="50.0" cy="185.1" r="0.44" fill="#ffffff" opacity="0.49"/><circle cx="80.0" cy="99.3" r="0.30" fill="#ffffff" opacity="0.39"/><circle cx="274.3" cy="7.3" r="0.30" fill="#ffffff" opacity="0.48"/><circle cx="141.8" cy="48.8" r="0.35" fill="#f0c890" opacity="0.56"/><circle cx="119.2" cy="98.3" r="0.62" fill="#ffffff" opacity="0.42"/><circle cx="84.9" cy="42.7" r="0.31" fill="#f0c890" opacity="0.31"/><circle cx="201.0" cy="27.7" r="0.83" fill="#ffffff" opacity="0.74"/><circle cx="3.9" cy="124.2" r="0.67" fill="#ffffff" opacity="0.44"/><circle cx="23.3" cy="167.0" r="0.66" fill="#dfe6ff" opacity="0.57"/><circle cx="165.1" cy="137.5" r="0.30" fill="#dfe6ff" opacity="0.30"/><circle cx="123.0" cy="52.3" r="0.79" fill="#ffffff" opacity="0.73"/><circle cx="89.2" cy="6.8" r="0.68" fill="#ffffff" opacity="0.32"/><circle cx="0.3" cy="75.8" r="0.36" fill="#ffffff" opacity="0.48"/><circle cx="68.4" cy="154.1" r="0.30" fill="#ffffff" opacity="0.65"/><circle cx="110.2" cy="8.3" r="0.30" fill="#ffffff" opacity="0.37"/><circle cx="23.3" cy="190.1" r="0.64" fill="#f0c890" opacity="0.29"/><circle cx="216.2" cy="118.4" r="0.55" fill="#ffd9a8" opacity="0.60"/><circle cx="41.2" cy="143.7" r="0.45" fill="#f0c890" opacity="0.22"/><circle cx="246.0" cy="124.5" r="0.52" fill="#ffffff" opacity="0.65"/><circle cx="250.9" cy="149.4" r="0.40" fill="#ffffff" opacity="0.65"/><circle cx="227.9" cy="115.9" r="0.69" fill="#f0c890" opacity="0.58"/><circle cx="177.3" cy="16.9" r="0.30" fill="#ffffff" opacity="0.55"/><circle cx="103.9" cy="89.6" r="0.30" fill="#ffffff" opacity="0.21"/><circle cx="187.7" cy="97.1" r="0.30" fill="#f0c890" opacity="0.64"/><circle cx="257.2" cy="178.2" r="0.30" fill="#f0c890" opacity="0.49"/><circle cx="203.2" cy="50.1" r="0.30" fill="#f0c890" opacity="0.35"/><circle cx="208.6" cy="45.8" r="0.45" fill="#ffd9a8" opacity="0.45"/><circle cx="21.2" cy="180.7" r="0.31" fill="#f0c890" opacity="0.23"/><circle cx="177.3" cy="15.4" r="0.30" fill="#f0c890" opacity="0.34"/><circle cx="191.1" cy="123.3" r="0.30" fill="#ffd9a8" opacity="0.47"/><circle cx="74.1" cy="133.4" r="0.48" fill="#dfe6ff" opacity="0.57"/><circle cx="195.5" cy="56.7" r="0.36" fill="#ffffff" opacity="0.62"/><circle cx="55.0" cy="194.2" r="0.75" fill="#ffd9a8" opacity="0.21"/><circle cx="21.1" cy="100.6" r="0.84" fill="#ffd9a8" opacity="0.75"/><circle cx="57.9" cy="187.7" r="0.31" fill="#ffffff" opacity="0.52"/><circle cx="206.2" cy="52.0" r="0.33" fill="#f0c890" opacity="0.53"/><circle cx="140.3" cy="176.0" r="0.49" fill="#ffd9a8" opacity="0.33"/><circle cx="108.7" cy="31.6" r="0.77" fill="#ffd9a8" opacity="0.57"/><circle cx="83.3" cy="27.9" r="0.32" fill="#dfe6ff" opacity="0.37"/><circle cx="0.5" cy="149.0" r="0.62" fill="#ffffff" opacity="0.27"/><circle cx="196.7" cy="179.0" r="0.31" fill="#ffd9a8" opacity="0.40"/><circle cx="107.6" cy="172.7" r="0.30" fill="#dfe6ff" opacity="0.71"/><circle cx="235.6" cy="55.7" r="0.30" fill="#f0c890" opacity="0.56"/><circle cx="258.0" cy="49.5" r="0.31" fill="#ffffff" opacity="0.48"/><circle cx="213.2" cy="155.9" r="0.34" fill="#f0c890" opacity="0.22"/><circle cx="110.3" cy="173.8" r="0.39" fill="#ffffff" opacity="0.31"/><circle cx="13.6" cy="145.4" r="0.35" fill="#f0c890" opacity="0.61"/><circle cx="239.8" cy="96.4" r="0.72" fill="#ffffff" opacity="0.50"/><circle cx="130.2" cy="68.2" r="0.31" fill="#f0c890" opacity="0.61"/><circle cx="71.8" cy="130.2" r="0.31" fill="#ffd9a8" opacity="0.51"/><circle cx="33.0" cy="127.7" r="0.30" fill="#ffd9a8" opacity="0.48"/><circle cx="151.8" cy="89.9" r="0.32" fill="#ffd9a8" opacity="0.62"/><circle cx="38.5" cy="38.2" r="0.30" fill="#ffffff" opacity="0.39"/><circle cx="88.1" cy="73.1" r="0.59" fill="#ffffff" opacity="0.31"/><circle cx="206.8" cy="81.9" r="0.34" fill="#ffd9a8" opacity="0.49"/><circle cx="74.5" cy="149.3" r="0.37" fill="#dfe6ff" opacity="0.52"/><circle cx="34.7" cy="99.9" r="0.44" fill="#ffffff" opacity="0.67"/><circle cx="25.5" cy="178.0" r="0.33" fill="#ffd9a8" opacity="0.56"/><circle cx="263.1" cy="168.5" r="0.67" fill="#ffffff" opacity="0.21"/><circle cx="117.3" cy="151.6" r="0.59" fill="#ffd9a8" opacity="0.73"/><circle cx="0.0" cy="77.7" r="0.74" fill="#ffd9a8" opacity="0.65"/><circle cx="268.1" cy="49.3" r="0.30" fill="#ffffff" opacity="0.28"/><circle cx="268.0" cy="21.6" r="0.61" fill="#ffd9a8" opacity="0.59"/><circle cx="23.4" cy="154.2" r="0.30" fill="#ffffff" opacity="0.27"/><circle cx="253.7" cy="128.1" r="0.32" fill="#dfe6ff" opacity="0.27"/><circle cx="145.7" cy="86.8" r="0.55" fill="#dfe6ff" opacity="0.25"/><circle cx="144.6" cy="115.7" r="0.33" fill="#ffffff" opacity="0.32"/><circle cx="0.3" cy="106.7" r="0.84" fill="#dfe6ff" opacity="0.35"/><circle cx="177.8" cy="175.4" r="0.36" fill="#ffffff" opacity="0.33"/><circle cx="8.1" cy="81.7" r="0.45" fill="#ffffff" opacity="0.23"/><circle cx="137.4" cy="133.9" r="0.34" fill="#f0c890" opacity="0.34"/><circle cx="117.0" cy="73.5" r="0.37" fill="#f0c890" opacity="0.58"/><circle cx="116.0" cy="135.5" r="0.30" fill="#f0c890" opacity="0.64"/><circle cx="233.1" cy="13.4" r="0.37" fill="#ffffff" opacity="0.31"/><circle cx="63.7" cy="44.0" r="0.54" fill="#ffffff" opacity="0.36"/><circle cx="136.7" cy="37.2" r="0.31" fill="#f0c890" opacity="0.43"/><circle cx="15.6" cy="118.1" r="0.73" fill="#ffffff" opacity="0.23"/><circle cx="268.7" cy="28.2" r="0.30" fill="#ffd9a8" opacity="0.23"/><circle cx="124.0" cy="141.3" r="0.32" fill="#ffffff" opacity="0.26"/><circle cx="256.9" cy="65.4" r="0.30" fill="#f0c890" opacity="0.71"/><circle cx="129.0" cy="61.9" r="0.51" fill="#dfe6ff" opacity="0.66"/><circle cx="122.0" cy="21.6" r="0.30" fill="#ffd9a8" opacity="0.24"/><circle cx="263.5" cy="24.6" r="0.79" fill="#dfe6ff" opacity="0.31"/><circle cx="212.0" cy="61.3" r="0.59" fill="#f0c890" opacity="0.25"/><circle cx="130.6" cy="74.0" r="0.73" fill="#dfe6ff" opacity="0.31"/><circle cx="203.4" cy="94.2" r="0.44" fill="#f0c890" opacity="0.34"/><circle cx="211.4" cy="8.1" r="0.30" fill="#ffffff" opacity="0.23"/><circle cx="70.9" cy="148.3" r="0.70" fill="#dfe6ff" opacity="0.39"/><circle cx="92.4" cy="189.3" r="0.30" fill="#f0c890" opacity="0.61"/><circle cx="87.3" cy="54.7" r="0.30" fill="#f0c890" opacity="0.62"/><circle cx="261.0" cy="13.0" r="0.61" fill="#f0c890" opacity="0.26"/><circle cx="263.9" cy="189.4" r="0.33" fill="#ffd9a8" opacity="0.34"/><circle cx="224.7" cy="26.3" r="0.37" fill="#f0c890" opacity="0.20"/><circle cx="83.7" cy="137.4" r="0.30" fill="#dfe6ff" opacity="0.33"/><circle cx="127.1" cy="155.6" r="0.42" fill="#ffd9a8" opacity="0.48"/><circle cx="207.6" cy="49.1" r="0.30" fill="#ffffff" opacity="0.22"/><circle cx="150.2" cy="31.9" r="0.34" fill="#ffffff" opacity="0.26"/><circle cx="73.1" cy="16.7" r="0.30" fill="#f0c890" opacity="0.47"/><circle cx="268.1" cy="34.4" r="0.30" fill="#f0c890" opacity="0.45"/><circle cx="64.8" cy="106.9" r="0.55" fill="#dfe6ff" opacity="0.62"/><circle cx="81.0" cy="112.5" r="0.33" fill="#ffffff" opacity="0.61"/><circle cx="121.2" cy="36.9" r="0.31" fill="#ffffff" opacity="0.35"/><circle cx="51.9" cy="12.9" r="0.31" fill="#ffffff" opacity="0.34"/><circle cx="63.8" cy="160.5" r="0.45" fill="#ffffff" opacity="0.75"/><circle cx="1.2" cy="175.2" r="0.31" fill="#dfe6ff" opacity="0.45"/><circle cx="11.1" cy="58.3" r="0.30" fill="#ffffff" opacity="0.30"/><circle cx="53.5" cy="14.9" r="0.37" fill="#ffffff" opacity="0.30"/><circle cx="71.7" cy="154.4" r="0.77" fill="#ffffff" opacity="0.26"/><circle cx="195.7" cy="69.4" r="0.30" fill="#ffffff" opacity="0.39"/><circle cx="56.3" cy="50.6" r="0.42" fill="#ffffff" opacity="0.56"/><circle cx="224.7" cy="162.5" r="0.34" fill="#ffffff" opacity="0.40"/><circle cx="86.1" cy="40.4" r="0.58" fill="#ffffff" opacity="0.50"/><circle cx="112.6" cy="158.0" r="0.46" fill="#ffffff" opacity="0.29"/><circle cx="25.1" cy="32.5" r="0.48" fill="#dfe6ff" opacity="0.43"/><circle cx="184.2" cy="82.9" r="0.30" fill="#dfe6ff" opacity="0.61"/><circle cx="114.2" cy="3.6" r="0.55" fill="#f0c890" opacity="0.64"/><circle cx="54.4" cy="144.5" r="0.30" fill="#ffffff" opacity="0.20"/><circle cx="116.9" cy="162.8" r="0.34" fill="#ffd9a8" opacity="0.69"/><circle cx="213.2" cy="25.8" r="0.30" fill="#ffd9a8" opacity="0.28"/><circle cx="24.6" cy="123.5" r="0.33" fill="#ffffff" opacity="0.48"/><circle cx="96.0" cy="32.1" r="0.30" fill="#ffd9a8" opacity="0.24"/><circle cx="135.3" cy="159.8" r="0.80" fill="#ffffff" opacity="0.31"/><circle cx="230.9" cy="8.6" r="0.72" fill="#ffffff" opacity="0.37"/><circle cx="255.4" cy="77.0" r="0.71" fill="#ffffff" opacity="0.54"/><circle cx="176.6" cy="170.0" r="0.43" fill="#ffffff" opacity="0.54"/><circle cx="228.7" cy="36.3" r="0.31" fill="#ffffff" opacity="0.42"/><circle cx="43.2" cy="71.3" r="0.30" fill="#ffffff" opacity="0.73"/><circle cx="11.3" cy="111.6" r="0.54" fill="#dfe6ff" opacity="0.22"/><circle cx="32.5" cy="119.0" r="0.39" fill="#dfe6ff" opacity="0.54"/><circle cx="179.0" cy="61.2" r="0.31" fill="#dfe6ff" opacity="0.41"/><circle cx="123.2" cy="87.0" r="0.30" fill="#ffd9a8" opacity="0.54"/><circle cx="128.3" cy="88.7" r="0.43" fill="#ffffff" opacity="0.65"/><circle cx="223.5" cy="79.5" r="0.30" fill="#dfe6ff" opacity="0.40"/><circle cx="25.3" cy="87.7" r="0.37" fill="#f0c890" opacity="0.22"/><circle cx="35.9" cy="183.0" r="0.32" fill="#ffffff" opacity="0.60"/><circle cx="15.0" cy="100.0" r="0.33" fill="#ffffff" opacity="0.72"/><circle cx="7.1" cy="13.2" r="0.43" fill="#ffffff" opacity="0.58"/><circle cx="53.4" cy="194.9" r="0.37" fill="#ffffff" opacity="0.73"/><circle cx="189.2" cy="143.1" r="0.31" fill="#ffffff" opacity="0.66"/><circle cx="208.6" cy="31.5" r="0.70" fill="#ffd9a8" opacity="0.35"/><circle cx="39.6" cy="99.7" r="0.73" fill="#dfe6ff" opacity="0.31"/><circle cx="169.9" cy="47.1" r="0.33" fill="#ffd9a8" opacity="0.31"/><circle cx="44.5" cy="185.9" r="0.47" fill="#ffffff" opacity="0.69"/><circle cx="218.5" cy="52.5" r="0.55" fill="#dfe6ff" opacity="0.23"/><circle cx="266.5" cy="89.9" r="0.38" fill="#ffffff" opacity="0.58"/><circle cx="69.5" cy="106.3" r="0.65" fill="#dfe6ff" opacity="0.61"/><circle cx="73.0" cy="196.6" r="0.41" fill="#ffffff" opacity="0.40"/><circle cx="122.0" cy="35.1" r="0.53" fill="#ffffff" opacity="0.23"/><circle cx="70.0" cy="126.9" r="0.82" fill="#f0c890" opacity="0.52"/><circle cx="247.0" cy="145.5" r="0.53" fill="#dfe6ff" opacity="0.32"/><circle cx="169.9" cy="85.8" r="0.37" fill="#ffffff" opacity="0.69"/><circle cx="134.7" cy="121.6" r="0.30" fill="#ffffff" opacity="0.23"/><circle cx="97.9" cy="21.1" r="0.33" fill="#ffffff" opacity="0.32"/><circle cx="83.1" cy="26.5" r="0.33" fill="#ffffff" opacity="0.66"/><circle cx="37.2" cy="185.9" r="0.31" fill="#ffffff" opacity="0.28"/><circle cx="17.6" cy="28.7" r="0.46" fill="#dfe6ff" opacity="0.35"/><circle cx="266.7" cy="11.1" r="0.60" fill="#ffffff" opacity="0.69"/><circle cx="178.1" cy="88.1" r="0.75" fill="#ffffff" opacity="0.60"/><circle cx="45.5" cy="0.1" r="0.30" fill="#ffffff" opacity="0.21"/><circle cx="65.5" cy="11.6" r="0.56" fill="#ffffff" opacity="0.21"/><circle cx="181.1" cy="39.2" r="0.34" fill="#f0c890" opacity="0.49"/><circle cx="139.8" cy="127.4" r="0.60" fill="#dfe6ff" opacity="0.30"/><circle cx="17.6" cy="124.3" r="0.84" fill="#ffd9a8" opacity="0.60"/><circle cx="197.3" cy="1.3" r="0.63" fill="#ffd9a8" opacity="0.61"/><circle cx="22.2" cy="130.1" r="0.30" fill="#dfe6ff" opacity="0.75"/><circle cx="64.1" cy="7.7" r="0.32" fill="#f0c890" opacity="0.61"/><circle cx="260.0" cy="52.3" r="0.30" fill="#f0c890" opacity="0.55"/><circle cx="120.3" cy="156.5" r="0.38" fill="#f0c890" opacity="0.35"/><circle cx="256.1" cy="177.5" r="0.30" fill="#ffffff" opacity="0.48"/><circle cx="71.8" cy="46.9" r="0.53" fill="#f0c890" opacity="0.72"/><circle cx="252.3" cy="38.1" r="0.33" fill="#ffd9a8" opacity="0.53"/><circle cx="250.3" cy="125.2" r="0.48" fill="#ffffff" opacity="0.57"/><circle cx="129.5" cy="166.7" r="0.49" fill="#ffd9a8" opacity="0.67"/><circle cx="263.6" cy="46.4" r="0.68" fill="#ffd9a8" opacity="0.63"/><circle cx="171.7" cy="15.4" r="0.72" fill="#ffffff" opacity="0.28"/><circle cx="30.9" cy="123.5" r="0.30" fill="#f0c890" opacity="0.74"/><circle cx="7.9" cy="8.3" r="0.48" fill="#f0c890" opacity="0.55"/><circle cx="18.7" cy="9.3" r="0.65" fill="#ffffff" opacity="0.62"/><circle cx="225.5" cy="162.7" r="0.69" fill="#f0c890" opacity="0.24"/><circle cx="260.4" cy="21.3" r="0.30" fill="#ffffff" opacity="0.26"/><circle cx="261.8" cy="180.9" r="0.54" fill="#f0c890" opacity="0.25"/><circle cx="174.4" cy="94.7" r="0.30" fill="#f0c890" opacity="0.64"/><circle cx="56.5" cy="63.3" r="0.34" fill="#dfe6ff" opacity="0.21"/><circle cx="256.5" cy="9.6" r="0.54" fill="#ffffff" opacity="0.70"/><circle cx="138.9" cy="169.0" r="0.43" fill="#ffd9a8" opacity="0.22"/><circle cx="8.6" cy="102.9" r="0.30" fill="#ffffff" opacity="0.46"/><circle cx="148.3" cy="43.0" r="0.65" fill="#dfe6ff" opacity="0.25"/><circle cx="47.0" cy="0.3" r="0.30" fill="#ffffff" opacity="0.62"/><circle cx="1.2" cy="97.4" r="0.37" fill="#ffffff" opacity="0.64"/><circle cx="266.7" cy="117.6" r="0.78" fill="#ffffff" opacity="0.48"/><circle cx="260.3" cy="56.3" r="0.31" fill="#ffd9a8" opacity="0.58"/><circle cx="45.7" cy="186.3" r="0.55" fill="#f0c890" opacity="0.47"/><circle cx="154.8" cy="20.8" r="0.32" fill="#ffd9a8" opacity="0.25"/><circle cx="246.0" cy="147.9" r="0.34" fill="#dfe6ff" opacity="0.56"/><circle cx="56.8" cy="52.2" r="0.70" fill="#ffd9a8" opacity="0.48"/><circle cx="270.9" cy="125.2" r="0.76" fill="#ffffff" opacity="0.27"/><circle cx="208.1" cy="149.5" r="0.45" fill="#dfe6ff" opacity="0.39"/><circle cx="143.9" cy="172.3" r="0.35" fill="#dfe6ff" opacity="0.50"/><circle cx="46.8" cy="87.1" r="0.55" fill="#ffffff" opacity="0.52"/><circle cx="92.1" cy="127.6" r="0.49" fill="#dfe6ff" opacity="0.48"/><circle cx="83.2" cy="139.6" r="0.63" fill="#ffffff" opacity="0.29"/><circle cx="268.8" cy="143.5" r="0.42" fill="#ffffff" opacity="0.39"/><circle cx="90.5" cy="37.6" r="0.81" fill="#ffffff" opacity="0.60"/><circle cx="45.4" cy="130.6" r="0.30" fill="#ffffff" opacity="0.28"/><circle cx="219.2" cy="145.6" r="0.35" fill="#f0c890" opacity="0.31"/><circle cx="251.4" cy="55.7" r="0.68" fill="#ffffff" opacity="0.46"/><circle cx="110.1" cy="157.0" r="0.48" fill="#f0c890" opacity="0.48"/><circle cx="81.7" cy="4.4" r="0.31" fill="#ffffff" opacity="0.61"/><circle cx="204.4" cy="180.2" r="0.34" fill="#f0c890" opacity="0.52"/><circle cx="178.5" cy="167.9" r="0.46" fill="#f0c890" opacity="0.56"/><circle cx="193.1" cy="169.2" r="0.47" fill="#ffd9a8" opacity="0.55"/><circle cx="119.3" cy="51.6" r="0.49" fill="#ffffff" opacity="0.69"/><circle cx="215.8" cy="141.6" r="0.44" fill="#ffd9a8" opacity="0.34"/><circle cx="133.1" cy="3.9" r="0.65" fill="#f0c890" opacity="0.49"/><circle cx="256.5" cy="36.3" r="0.45" fill="#ffd9a8" opacity="0.63"/><circle cx="229.4" cy="180.3" r="0.30" fill="#ffffff" opacity="0.34"/><circle cx="44.4" cy="155.2" r="0.76" fill="#ffffff" opacity="0.49"/><circle cx="233.6" cy="90.7" r="0.30" fill="#ffffff" opacity="0.46"/><circle cx="176.3" cy="164.6" r="0.38" fill="#ffd9a8" opacity="0.43"/><circle cx="57.9" cy="135.8" r="0.33" fill="#ffffff" opacity="0.62"/><circle cx="201.1" cy="121.9" r="0.44" fill="#ffd9a8" opacity="0.34"/><circle cx="110.2" cy="2.6" r="0.34" fill="#f0c890" opacity="0.43"/></g><ellipse cx="141.4" cy="108.2" rx="33" ry="29" fill="url(#gal)" filter="url(#gb1)"/><g filter="url(#gb1)"><path d="M138.3 110.3 L137.9 110.2 L137.5 110.1 L137.1 109.9 L136.8 109.7 L136.4 109.4 L136.1 109.1 L135.8 108.7 L135.5 108.3 L135.2 107.9 L135.0 107.4 L134.9 106.9 L134.8 106.4 L134.7 105.8 L134.7 105.2 L134.8 104.6 L135.0 103.9 L135.2 103.3 L135.6 102.7 L136.0 102.0 L136.5 101.4 L137.1 100.8 L137.7 100.3 L138.5 99.8 L139.3 99.3 L140.3 98.9 L141.3 98.6 L142.4 98.3 L143.5 98.2 L144.7 98.1 L146.0 98.2 L147.3 98.4 L148.6 98.7 L150.0 99.1 L151.3 99.7 L152.6 100.5 L153.9 101.3 L155.1 102.4 L156.2 103.6 L157.2 104.9 L158.2 106.4 L159.0 108.0 L159.6 109.7 L160.0 111.6 L160.3 113.6 L160.3 115.6 L160.1 117.8 L159.6 120.0 L158.9 122.2 L157.9 124.5 L156.6 126.7 L155.0 128.9 L153.0 131.0 L150.8 133.0" fill="none" stroke="#c3cfea" stroke-opacity="0.38" stroke-width="3.0" stroke-linecap="round"/><path d="M142.5 105.1 L142.9 105.2 L143.3 105.3 L143.7 105.5 L144.0 105.7 L144.4 106.0 L144.7 106.3 L145.0 106.7 L145.3 107.1 L145.6 107.5 L145.8 108.0 L145.9 108.5 L146.0 109.0 L146.1 109.6 L146.1 110.2 L146.0 110.8 L145.8 111.5 L145.6 112.1 L145.2 112.7 L144.8 113.4 L144.3 114.0 L143.7 114.6 L143.1 115.1 L142.3 115.6 L141.5 116.1 L140.5 116.5 L139.5 116.8 L138.4 117.1 L137.3 117.2 L136.1 117.3 L134.8 117.2 L133.5 117.0 L132.2 116.7 L130.8 116.3 L129.5 115.7 L128.2 114.9 L126.9 114.1 L125.7 113.0 L124.6 111.8 L123.6 110.5 L122.6 109.0 L121.8 107.4 L121.2 105.7 L120.8 103.8 L120.5 101.8 L120.5 99.8 L120.7 97.6 L121.2 95.4 L121.9 93.2 L122.9 90.9 L124.2 88.7 L125.8 86.5 L127.8 84.4 L130.0 82.4" fill="none" stroke="#c3cfea" stroke-opacity="0.38" stroke-width="3.0" stroke-linecap="round"/><path d="M137.7 106.5 L137.7 106.2 L137.8 105.9 L137.9 105.6 L138.1 105.3 L138.3 104.9 L138.5 104.6 L138.8 104.4 L139.1 104.1 L139.5 103.8 L139.9 103.6 L140.3 103.4 L140.8 103.3 L141.4 103.1 L141.9 103.1 L142.5 103.1 L143.1 103.1 L143.7 103.2 L144.4 103.3 L145.0 103.5 L145.7 103.8 L146.3 104.2 L146.9 104.6 L147.5 105.1 L148.1 105.7 L148.6 106.3 L149.0 107.1 L149.4 107.8 L149.7 108.7 L149.9 109.6 L150.1 110.5 L150.1 111.6 L150.0 112.6 L149.7 113.7 L149.4 114.7 L148.9 115.8 L148.3 116.9 L147.5 118.0 L146.5 119.0 L145.4 120.0 L144.2 120.9 L142.8 121.7 L141.3 122.5 L139.6 123.1 L137.8 123.5 L135.9 123.9 L133.9 124.0 L131.7 124.0 L129.6 123.8 L127.3 123.3 L125.1 122.6 L122.8 121.7 L120.5 120.6 L118.3 119.2 L116.2 117.5 L114.2 115.6 L112.4 113.5 L110.7 111.1" fill="none" stroke="#c3cfea" stroke-opacity="0.22" stroke-width="2.2" stroke-linecap="round"/><path d="M143.3 109.0 L143.3 109.3 L143.2 109.6 L143.1 110.0 L142.9 110.3 L142.7 110.6 L142.4 110.9 L142.1 111.2 L141.8 111.5 L141.4 111.8 L140.9 112.0 L140.5 112.2 L139.9 112.4 L139.4 112.5 L138.8 112.6 L138.2 112.6 L137.5 112.6 L136.9 112.5 L136.2 112.3 L135.5 112.1 L134.8 111.8 L134.1 111.4 L133.5 111.0 L132.9 110.4 L132.3 109.8 L131.7 109.1 L131.3 108.4 L130.9 107.6 L130.5 106.7 L130.3 105.7 L130.2 104.7 L130.2 103.6 L130.3 102.5 L130.5 101.4 L130.9 100.2 L131.4 99.1 L132.1 97.9 L132.9 96.8 L133.9 95.7 L135.1 94.7 L136.4 93.7 L137.8 92.8 L139.5 92.1 L141.2 91.4 L143.1 90.9 L145.2 90.6 L147.3 90.4 L149.6 90.5 L151.9 90.7 L154.2 91.2 L156.6 91.9 L159.1 92.8 L161.4 94.0 L163.8 95.5 L166.0 97.3 L168.1 99.3" fill="none" stroke="#c3cfea" stroke-opacity="0.22" stroke-width="2.2" stroke-linecap="round"/><path d="M97.6 85.1 Q103.6 94.5 109.6 102.1 Q113.6 109.5 118.6 115.1 Q126.6 125.5 139.6 129.5" fill="none" stroke="#b4c2e0" stroke-opacity="0.5" stroke-width="2.4" stroke-linecap="round"/><path d="M152.6 81.5 Q169.6 86.5 174.6 104.5 Q175.6 118.5 165.6 128.5" fill="none" stroke="#b4c2e0" stroke-opacity="0.45" stroke-width="2.4" stroke-linecap="round"/><path d="M128.6 86.5 Q114.6 78.5 115.6 65.5 Q116.6 56.5 121.6 52.0" fill="none" stroke="#a8b8da" stroke-opacity="0.3" stroke-width="2" stroke-linecap="round"/><path d="M154.6 54.5 Q151.6 64.5 158.6 74.5" fill="none" stroke="#a8b8da" stroke-opacity="0.22" stroke-width="1.8" stroke-linecap="round"/></g><circle cx="137.4" cy="106.7" r="3.4" fill="#fff" filter="url(#gb2)"/><g filter="url(#gb3)"><circle cx="110.1" cy="102.1" r="1.0" fill="#fff" opacity="0.9"/><circle cx="118.6" cy="115.3" r="1.0" fill="#fff" opacity="0.9"/><circle cx="167.1" cy="127.3" r="1.0" fill="#fff" opacity="0.9"/><circle cx="98.2" cy="86.5" r="0.8" fill="#fff" opacity="0.9"/><circle cx="125.6" cy="87.5" r="0.6" fill="#fff" opacity="0.9"/><circle cx="146.6" cy="93.5" r="0.6" fill="#fff" opacity="0.9"/><circle cx="132.6" cy="120.5" r="0.6" fill="#fff" opacity="0.9"/><circle cx="154.6" cy="116.5" r="0.6" fill="#fff" opacity="0.9"/><circle cx="143.6" cy="136.5" r="0.7" fill="#fff" opacity="0.9"/><circle cx="161.6" cy="98.5" r="0.5" fill="#fff" opacity="0.9"/><circle cx="129.6" cy="104.5" r="0.5" fill="#fff" opacity="0.9"/><circle cx="149.6" cy="126.5" r="0.5" fill="#fff" opacity="0.9"/></g><g filter="url(#gb3)"><circle cx="153.0" cy="18.5" r="1.5" fill="#fff"/><circle cx="210.4" cy="102.0" r="1.2" fill="#fff"/><circle cx="215.6" cy="86.7" r="0.8" fill="#fff"/><circle cx="86.2" cy="92.6" r="0.9" fill="#fff"/><circle cx="59.8" cy="185.9" r="0.9" fill="#f0a860"/><circle cx="31.0" cy="144.7" r="0.9" fill="#f0a860"/><circle cx="64.8" cy="17.6" r="0.8" fill="#f0b070"/><circle cx="89.8" cy="21.5" r="0.7" fill="#ddd"/><circle cx="110.4" cy="26.5" r="0.7" fill="#e8c8a0"/><circle cx="267.6" cy="23.5" r="0.7" fill="#fff"/><circle cx="235.4" cy="146.1" r="0.7" fill="#fff"/><circle cx="178.2" cy="57.0" r="0.7" fill="#f0c080"/><circle cx="203.1" cy="38.0" r="0.6" fill="#e8c8a0"/><circle cx="179.6" cy="16.5" r="0.6" fill="#fff"/><circle cx="247.6" cy="67.5" r="0.6" fill="#fff"/><circle cx="26.6" cy="48.5" r="0.6" fill="#fff"/><circle cx="20.6" cy="170.5" r="0.6" fill="#f0b070"/><circle cx="126.6" cy="190.5" r="0.6" fill="#fff"/><circle cx="246.6" cy="116.5" r="0.6" fill="#fff"/></g><ellipse cx="43.3" cy="75.5" rx="2.4" ry="1.6" fill="#8a93ad" opacity="0.7" filter="url(#gb2)"/><path d="M133.2 106.7 h3 m2.4 0 h3 M137.4 102.5 v3 m0 2.4 v3" stroke="#d83ad8" stroke-width="0.9"/><rect x="85.3" y="71.5" width="106.1" height="70.2" fill="none" stroke="#96931f" stroke-width="1"/></g></svg>
<div class="a" style="left:394.4px;top:355.4px;width:28.1px;height:12.9px;background:#050505;border-radius:2px;box-shadow:inset 0 0 0 0.8px #e8e8e8;"></div>
<div class="t" style="left:396.7px;top:360px;font-size:5.60px;color:#fff;font-weight:bold;font-family:'Liberation Mono',monospace;letter-spacing:-0.035px;">ICRS</div>
<svg style="left:414.0px;top:360.4px;" width="5.2" height="3.2" viewBox="0 0 5.2 3.2"><path d="M0.4 0.4 L2.6 2.6 L4.8 0.4" fill="none" stroke="#fff" stroke-width="1.1"/></svg>
<div class="a" style="left:394.4px;top:373.0px;width:14.0px;height:13.7px;background:#050505;border-radius:2px;box-shadow:inset 0 0 0 0.8px #e8e8e8;"></div>
<svg style="left:397.2px;top:375.4px;" width="8.4" height="8.8" viewBox="0 0 8.4 8.8"><g fill="none" stroke="#fff" stroke-width="0.8" stroke-linejoin="round"><path d="M4.2 0.6 L7.8 2.6 L4.2 4.6 L0.6 2.6 Z"/><path d="M0.6 4.4 L4.2 6.4 L7.8 4.4"/><path d="M0.6 6.2 L4.2 8.2 L7.8 6.2"/></g></svg>
<div class="a" style="left:627.6px;top:355.4px;width:24.6px;height:12.9px;background:#050505;border-radius:2px;box-shadow:inset 0 0 0 0.8px #e8e8e8;"></div>
<svg style="left:630.4px;top:357.6px;" width="8.8" height="8.8" viewBox="0 0 8.8 8.8"><g fill="none" stroke="#fff" stroke-width="0.8"><rect x="0.4" y="0.4" width="8" height="8"/><path d="M3.1 0.4 V8.4 M5.8 0.4 V8.4 M0.4 3.1 H8.4 M0.4 5.8 H8.4"/></g></svg>
<div class="t" style="left:641.4px;top:361px;font-size:5.20px;color:#fff;font-weight:bold;font-family:'Liberation Mono',monospace;letter-spacing:-0.120px;">STG</div>
<div class="a" style="left:654.6px;top:355.4px;width:13.1px;height:12.9px;background:#050505;border-radius:2px;box-shadow:inset 0 0 0 0.8px #e8e8e8;"></div>
<svg style="left:657.4px;top:358.1px;" width="7.6" height="7.6" viewBox="0 0 7.6 7.6"><g fill="none" stroke="#fff" stroke-width="1"><path d="M0.4 2.4 V0.4 H2.4 M5.2 0.4 H7.2 V2.4 M7.2 5.2 V7.2 H5.2 M2.4 7.2 H0.4 V5.2"/><path d="M0.6 0.6 L2.6 2.6 M7 0.6 L5 2.6 M7 7 L5 5 M0.6 7 L2.6 5" stroke-width="0.8"/></g></svg>
<div class="a" style="left:579.6px;top:415.2px;width:66.8px;height:11.8px;background:#050505;border-radius:2.5px;box-shadow:inset 0 0 0 0.7px #555;"></div>
<div class="t" style="left:583.2px;top:419px;font-size:5.50px;color:#fff;font-weight:bold;letter-spacing:0.236px;">22.71&#x27; × 15.18&#x27;, θ = 0°</div>
<div class="a" style="left:670.6px;top:316.8px;width:7.8px;height:235.6px;background:#f4f4f6;"></div>
<svg style="left:672.2px;top:320.8px;" width="4.8" height="3.4" viewBox="0 0 4.8 3.4"><path d="M0 3.4 L2.4 0 L4.8 3.4 Z" fill="#555"/></svg>
<svg style="left:672.2px;top:545.2px;" width="4.8" height="3.4" viewBox="0 0 4.8 3.4"><path d="M0 0 L2.4 3.4 L4.8 0 Z" fill="#555"/></svg>
<div class="a" style="left:672.1px;top:329.6px;width:5.1px;height:198.8px;background:#8b8b8b;border-radius:2.6px;"></div>
<div class="a" style="left:680.6px;top:316.8px;width:296.4px;height:235.6px;background:#fff;"></div>
<div class="a" style="left:684.7px;top:316.8px;width:278.7px;height:176.0px;background:#000;"></div>
<div class="t" style="left:686.8px;top:499px;font-size:4.90px;color:#3c84c8;letter-spacing:0.093px;">MAIN_WEAO_CAMERA.2026-02-27T10-35-03Z.fits</div>
<div class="a" style="left:684.7px;top:507.6px;width:278.7px;height:44.8px;background:#000;"></div>
<svg style="left:969.4px;top:320.6px;" width="4.8" height="3.4" viewBox="0 0 4.8 3.4"><path d="M0 3.4 L2.4 0 L4.8 3.4 Z" fill="#555"/></svg>
<svg style="left:969.4px;top:545.2px;" width="4.8" height="3.4" viewBox="0 0 4.8 3.4"><path d="M0 0 L2.4 3.4 L4.8 0 Z" fill="#555"/></svg>
<div class="a" style="left:968.7px;top:332.7px;width:6.3px;height:16.5px;background:#555;border-radius:2.8px;"></div>
<!-- ===== sec_bottom ===== -->
<div class="a" style="left:61.9px;top:552.4px;width:915.1px;height:41.0px;background:#f7f8fd;"></div>
<div class="a" style="left:66.6px;top:558.0px;width:399.4px;height:30.8px;background:#fff;border-radius:3px;border:0.8px dotted #c9cdd9;box-sizing:border-box;"></div>
<div class="t" style="left:70.0px;top:564px;font-size:5.90px;color:#a5a5a8;letter-spacing:0.075px;">Guiding...</div>
<div class="a" style="left:473.4px;top:558.0px;width:407.9px;height:30.8px;background:#fff;border-radius:3px;border:0.8px dotted #c9cdd9;box-sizing:border-box;"></div>
<div class="t" style="left:477.3px;top:564px;font-size:5.90px;color:#a5a5a8;letter-spacing:0.095px;">Monitoring...</div>
<div class="a" style="left:889.0px;top:558.0px;width:84.4px;height:30.8px;background:#fff;border-radius:3px;border:0.8px dotted #c9cdd9;box-sizing:border-box;"></div>
<div class="t" style="left:893.0px;top:563px;font-size:5.60px;color:#a5a5a8;letter-spacing:0.153px;">AllSky Camera Images 0</div>
<div class="a" style="left:34.7px;top:596.0px;width:27.3px;height:11.6px;background:#fff;"></div>
<div class="a" style="left:37.6px;top:590.0px;width:24.3px;height:17.0px;background:#1f2341;border-radius:0 0 0 4.5px;"></div>
<div class="a" style="left:41.4px;top:559.2px;width:16.4px;height:0.7px;background:#3b405e;"></div>
<svg style="left:46.8px;top:573.0px;" width="5.6" height="5.6" viewBox="0 0 5.6 5.6"><circle cx="2.8" cy="2.8" r="2.4" fill="none" stroke="#f0f0f4" stroke-width="0.8"/><path d="M2.8 0.4 A2.4 2.4 0 0 0 2.8 5.2 Z" fill="#f0f0f4"/></svg>
<svg style="left:47.20px;top:591.30px;" width="4.80" height="4.80" viewBox="0 0 4.80 4.80"><ellipse cx="2.40" cy="2.40" rx="1.75" ry="1.75" fill="none" stroke="#d5d8e2" stroke-width="1.3"/></svg>
<div class="a" style="left:61.9px;top:593.4px;width:915.1px;height:14.2px;background:#1f2845;"></div>
<div class="t" style="left:65.6px;top:598px;font-size:5.90px;color:#56618a;letter-spacing:0.119px;">Connection:</div>
<svg style="left:102.80px;top:597.70px;" width="5.40" height="5.40" viewBox="0 0 5.40 5.40"><ellipse cx="2.70" cy="2.70" rx="2.70" ry="2.70" fill="#3fae57"/></svg>
<div class="a" style="left:114.7px;top:595.6px;width:0.7px;height:9.0px;background:#56608a;"></div>
<svg style="left:121.6px;top:597.4px;" width="6" height="5.6" viewBox="0 0 6 5.6"><path d="M0 0.8 H6 M0 2.8 H6 M0 4.8 H6" stroke="#c9cede" stroke-width="0.8"/><rect x="3.4" y="0" width="1.4" height="1.6" fill="#c9cede"/><rect x="1" y="2" width="1.4" height="1.6" fill="#c9cede"/><rect x="3.8" y="4" width="1.4" height="1.6" fill="#c9cede"/></svg>
<div class="t" style="left:131.6px;top:598px;font-size:5.90px;color:#56618a;letter-spacing:-0.043px;">Observing Setup:</div>
<div class="a" style="left:181.4px;top:594.7px;width:124.5px;height:11.2px;background:#1a2240;border-radius:2px;box-shadow:inset 0 0 0 0.7px #4d5778;"></div>
<div class="t" style="left:183.8px;top:597px;font-size:7.00px;color:#fff;letter-spacing:-0.172px;">Dome WEAO Observing Setup</div>
<div class="a" style="left:280.6px;top:597.6px;width:5.4px;height:5.4px;background:#f4e9ea;border-radius:1.2px;"></div>
<svg style="left:280.6px;top:597.6px;" width="5.4" height="5.4" viewBox="0 0 5.4 5.4"><path d="M1.2 4.2 L4.2 1.4" stroke="#9c1f24" stroke-width="1.5" stroke-linecap="round"/></svg>
<svg style="left:294.0px;top:598.8px;" width="6" height="3.6" viewBox="0 0 6 3.6"><path d="M0.3 0.4 L3 3.1 L5.7 0.4" fill="none" stroke="#dfe2ee" stroke-width="0.85"/></svg>
<div class="a" style="left:311.9px;top:595.6px;width:0.7px;height:9.0px;background:#56608a;"></div>
<svg style="left:320.4px;top:597.6px;" width="5.4" height="5" viewBox="0 0 5.4 5"><path d="M1.4 0.3 L0.2 3.6 A1 1 0 0 0 2.2 4 L2.3 0.5 Z M4 0.3 L5.2 3.6 A1 1 0 0 1 3.2 4 L3.1 0.5 Z" fill="#c9cede"/></svg>
<div class="t" style="left:329.3px;top:598px;font-size:5.90px;color:#56618a;letter-spacing:-0.009px;">Equipments:</div>
<div class="a" style="left:366.0px;top:596.6px;width:57.6px;height:7.9px;background:#c9cede;border-radius:2px;"></div>
<div class="t" style="left:368.6px;top:598px;font-size:5.20px;color:#1f2845;font-weight:bold;transform-origin:0 50%;transform:scaleX(1.0989);">Make Global Check</div>
<div class="a" style="left:430.1px;top:595.6px;width:0.7px;height:9.0px;background:#56608a;"></div>
<svg style="left:437.6px;top:597.4px;" width="5.2" height="5.4" viewBox="0 0 5.2 5.4"><circle cx="2.6" cy="1.5" r="1.4" fill="#c9cede"/><path d="M0.2 5.4 Q0.2 3.2 2.6 3.2 Q5 3.2 5 5.4 Z" fill="#c9cede"/></svg>
<div class="t" style="left:446.5px;top:598px;font-size:5.90px;color:#56618a;letter-spacing:-0.056px;">Observer:</div>
<div class="t" style="left:476.3px;top:597px;font-size:6.20px;color:#fff;font-weight:bold;letter-spacing:0.183px;">@admin</div>
<div class="a" style="left:871.0px;top:595.8px;width:73.0px;height:8.9px;background:#2a3352;border-radius:2.5px;box-shadow:inset 0 0 0 0.7px #5b6586;"></div>
<div class="a" style="left:871.8px;top:596.5px;width:31.2px;height:7.5px;background:#dfe2ec;border-radius:3.6px;"></div>
<div class="t" style="left:875.6px;top:598px;font-size:5.60px;color:#30374f;transform-origin:0 50%;transform:scaleX(1.1125);">Records</div>
<div class="t" style="left:908.2px;top:598px;font-size:5.60px;color:#aab0c6;transform-origin:0 50%;transform:scaleX(1.1894);">Monitoring</div>
<svg style="left:950.1px;top:598.6px;" width="5.2" height="3.2" viewBox="0 0 5.2 3.2"><path d="M0.3 2.9 L2.6 0.5 L4.9 2.9" fill="none" stroke="#e6e8f0" stroke-width="0.9"/></svg>
<svg style="left:964.7px;top:597.4px;" width="4.8" height="5.6" viewBox="0 0 4.8 5.6"><path d="M0.3 2.6 L2.4 0.5 L4.5 2.6 M0.3 5.2 L2.4 3.1 L4.5 5.2" fill="none" stroke="#e6e8f0" stroke-width="0.9"/></svg>
<div class="a" style="left:977.0px;top:153.2px;width:9.4px;height:454.4px;background:#fff;border-radius:0 3.5px 0 0;"></div>
<div class="a" style="left:986.4px;top:152.6px;width:2.6px;height:455.0px;background:#f1f1f1;"></div>
<div class="a" style="left:34.7px;top:607.0px;width:954.3px;height:0.7px;background:#c9c9cf;"></div>
<!-- ===== sec_toolbar ===== -->
<svg style="left:51.0px;top:611.2px;" width="10" height="13" viewBox="0 0 10 13"><g fill="none" stroke="#ececee" stroke-width="0.9" stroke-linecap="round" stroke-linejoin="round"><rect x="3" y="0.5" width="4" height="7.4" rx="2"/><path d="M1 5.6 V6.2 A4 4 0 0 0 9 6.2 V5.6 M5 10.2 V12.2 M3 12.4 H7"/></g></svg>
<svg style="left:70.8px;top:615.5px;" width="5.2" height="3" viewBox="0 0 5.2 3"><path d="M0.4 2.7 L2.6 0.5 L4.8 2.7" fill="none" stroke="#e8e8ea" stroke-width="1"/></svg>
<div class="t" style="left:47.3px;top:629px;font-size:6.90px;color:#e4e4e6;letter-spacing:-0.090px;">Audio</div>
<svg style="left:98.0px;top:613.0px;" width="13.4" height="9" viewBox="0 0 13.4 9"><g fill="none" stroke="#ececee" stroke-width="0.9" stroke-linecap="round" stroke-linejoin="round"><rect x="0.5" y="0.9" width="8.4" height="7.2" rx="1.8"/><path d="M9.6 3.5 L12.8 1.4 V7.6 L9.6 5.5 Z"/></g></svg>
<svg style="left:119.4px;top:615.5px;" width="5.2" height="3" viewBox="0 0 5.2 3"><path d="M0.4 2.7 L2.6 0.5 L4.8 2.7" fill="none" stroke="#e8e8ea" stroke-width="1"/></svg>
<div class="t" style="left:96.1px;top:629px;font-size:6.90px;color:#e4e4e6;letter-spacing:-0.065px;">Video</div>
<svg style="left:369.4px;top:612.6px;" width="11.4" height="10.4" viewBox="0 0 11.4 10.4"><g fill="none" stroke="#ececee" stroke-width="0.9" stroke-linecap="round" stroke-linejoin="round"><circle cx="3.8" cy="2.6" r="1.9"/><path d="M0.5 9.8 V8.4 A2.4 2.4 0 0 1 2.9 6 H4.7 A2.4 2.4 0 0 1 7.1 8.4 V9.8 Z"/><circle cx="8.4" cy="4.3" r="1.5"/><path d="M8.2 9.8 H10.9 V8.6 A2 2 0 0 0 8.9 6.8 H8"/></g></svg>
<div class="t" style="left:384.4px;top:615px;font-size:5.60px;color:#a9a9ad;font-weight:bold;">3</div>
<svg style="left:393.9px;top:615.5px;" width="5.2" height="3" viewBox="0 0 5.2 3"><path d="M0.4 2.7 L2.6 0.5 L4.8 2.7" fill="none" stroke="#e8e8ea" stroke-width="1"/></svg>
<div class="t" style="left:357.2px;top:629px;font-size:6.90px;color:#e4e4e6;letter-spacing:0.004px;">Participants</div>
<svg style="left:421.6px;top:612.0px;" width="12.4" height="11.6" viewBox="0 0 12.4 11.6"><g fill="none" stroke="#ececee" stroke-width="0.9" stroke-linecap="round" stroke-linejoin="round"><path d="M3.6 2.4 V2 A1.5 1.5 0 0 1 5.1 0.5 H10.4 A1.5 1.5 0 0 1 11.9 2 V6 A1.5 1.5 0 0 1 10.4 7.5 H10"/><path d="M2 2.6 H8 A1.5 1.5 0 0 1 9.5 4.1 V7.6 A1.5 1.5 0 0 1 8 9.1 H4.6 L2.6 11 V9.1 H2 A1.5 1.5 0 0 1 0.5 7.6 V4.1 A1.5 1.5 0 0 1 2 2.6 Z"/></g><g fill="#ececee"><circle cx="3.1" cy="5.9" r="0.6"/><circle cx="5" cy="5.9" r="0.6"/><circle cx="6.9" cy="5.9" r="0.6"/></g></svg>
<svg style="left:442.7px;top:615.5px;" width="5.2" height="3" viewBox="0 0 5.2 3"><path d="M0.4 2.7 L2.6 0.5 L4.8 2.7" fill="none" stroke="#e8e8ea" stroke-width="1"/></svg>
<div class="t" style="left:420.8px;top:629px;font-size:6.90px;color:#e4e4e6;letter-spacing:-0.094px;">Chat</div>
<svg style="left:467.8px;top:612.4px;" width="13" height="11" viewBox="0 0 13 11"><path d="M6.5 10.4 C2.4 7.4 0.5 5.4 0.5 3.3 C0.5 1.7 1.8 0.5 3.3 0.5 C4.6 0.5 5.8 1.2 6.5 2.4 C7.2 1.2 8.4 0.5 9.7 0.5 C11.2 0.5 12.5 1.7 12.5 3.3 C12.5 5.4 10.6 7.4 6.5 10.4 Z" fill="none" stroke="#ececee" stroke-width="0.9" stroke-linecap="round" stroke-linejoin="round"/></svg>
<svg style="left:487.1px;top:615.5px;" width="5.2" height="3" viewBox="0 0 5.2 3"><path d="M0.4 2.7 L2.6 0.5 L4.8 2.7" fill="none" stroke="#e8e8ea" stroke-width="1"/></svg>
<div class="t" style="left:465.9px;top:629px;font-size:6.90px;color:#e4e4e6;letter-spacing:-0.125px;">React</div>
<div class="a" style="left:511.9px;top:612.2px;width:13.5px;height:10.8px;background:#4be07c;border-radius:2px;"></div>
<svg style="left:515.6px;top:614.3px;" width="6.2" height="6.8" viewBox="0 0 6.2 6.8"><path d="M3.1 6.6 V1 M0.6 3.4 L3.1 0.8 L5.6 3.4" fill="none" stroke="#111" stroke-width="1.3" stroke-linejoin="round"/></svg>
<div class="t" style="left:509.7px;top:629px;font-size:6.90px;color:#e4e4e6;letter-spacing:-0.123px;">Share</div>
<svg style="left:561.4px;top:611.6px;" width="12.6" height="12.4" viewBox="0 0 12.6 12.4"><defs><linearGradient id="aig" x1="0" y1="0" x2="1" y2="1"><stop offset="0" stop-color="#ffffff"/><stop offset="0.6" stop-color="#bfe0ff"/><stop offset="1" stop-color="#7fb8ff"/></linearGradient></defs><path d="M5.4 1.6 Q6.2 5.8 10.6 6.8 Q6.2 7.8 5.4 12 Q4.6 7.8 0.2 6.8 Q4.6 5.8 5.4 1.6 Z" fill="url(#aig)"/><path d="M10.4 0.2 Q10.7 1.9 12.4 2.2 Q10.7 2.5 10.4 4.2 Q10.1 2.5 8.4 2.2 Q10.1 1.9 10.4 0.2 Z" fill="#e8f3ff"/></svg>
<div class="t" style="left:546.1px;top:629px;font-size:6.90px;color:#e4e4e6;letter-spacing:-0.102px;">AI Companion</div>
<svg style="left:611.2px;top:611.4px;" width="12.8" height="12.8" viewBox="0 0 12.8 12.8"><circle cx="6.4" cy="6.4" r="5.9" fill="none" stroke="#ececee" stroke-width="0.9" stroke-linecap="round" stroke-linejoin="round"/><path d="M6.4 5.6 V9.6 M5.2 9.7 H7.6 M5.4 5.6 H6.4" fill="none" stroke="#ececee" stroke-width="0.9" stroke-linecap="round" stroke-linejoin="round"/><circle cx="6.3" cy="3.5" r="0.7" fill="#ececee"/></svg>
<div class="t" style="left:598.7px;top:629px;font-size:6.90px;color:#e4e4e6;letter-spacing:0.010px;">Meeting Info</div>
<svg style="left:658.0px;top:612.0px;" width="11.6" height="11.6" viewBox="0 0 11.6 11.6"><g fill="none" stroke="#ececee" stroke-width="0.9" stroke-linecap="round" stroke-linejoin="round"><path d="M0.5 3.8 V2 A1.5 1.5 0 0 1 2 0.5 H3.8"/><circle cx="8.9" cy="2.7" r="2.1"/><circle cx="2.7" cy="8.9" r="2.1"/><path d="M11.1 7.8 V9.6 A1.5 1.5 0 0 1 9.6 11.1 H7.8"/></g></svg>
<div class="t" style="left:656.1px;top:629px;font-size:6.90px;color:#e4e4e6;letter-spacing:-0.007px;">Apps</div>
<svg style="left:702.0px;top:611.4px;" width="12.8" height="12.8" viewBox="0 0 12.8 12.8"><circle cx="6.4" cy="6.4" r="5.9" fill="none" stroke="#ececee" stroke-width="0.9" stroke-linecap="round" stroke-linejoin="round"/><g fill="#ececee"><circle cx="3.7" cy="6.4" r="0.75"/><circle cx="6.4" cy="6.4" r="0.75"/><circle cx="9.1" cy="6.4" r="0.75"/></g></svg>
<div class="t" style="left:700.8px;top:629px;font-size:6.90px;color:#e4e4e6;letter-spacing:-0.180px;">More</div>
<svg style="left:964.0px;top:611.4px;" width="13" height="13" viewBox="0 0 13 13"><path d="M7.2 1.2 L12 0.4 V11.4 L9 12.4 V2.4" fill="none" stroke="#e23a55" stroke-width="1.1" stroke-linejoin="round"/><g fill="none" stroke="#f0f0f2" stroke-width="0.95" stroke-linecap="round" stroke-linejoin="round"><circle cx="4.9" cy="2.9" r="1.5"/><path d="M3.4 5 L5.8 4.8 L6.8 7.6 L5.6 8 M3.4 5 L1.8 8.2 L3.2 8.6 M3 8.4 L1.2 12.2 L2.6 12.4 L4.6 9 L6 12.4 L7.4 12.2 L5.8 8"/></g></svg>
<div class="t" style="left:961.7px;top:629px;font-size:6.90px;color:#e4e4e6;letter-spacing:-0.240px;">Leave</div>
</div>
</body>
</html>
